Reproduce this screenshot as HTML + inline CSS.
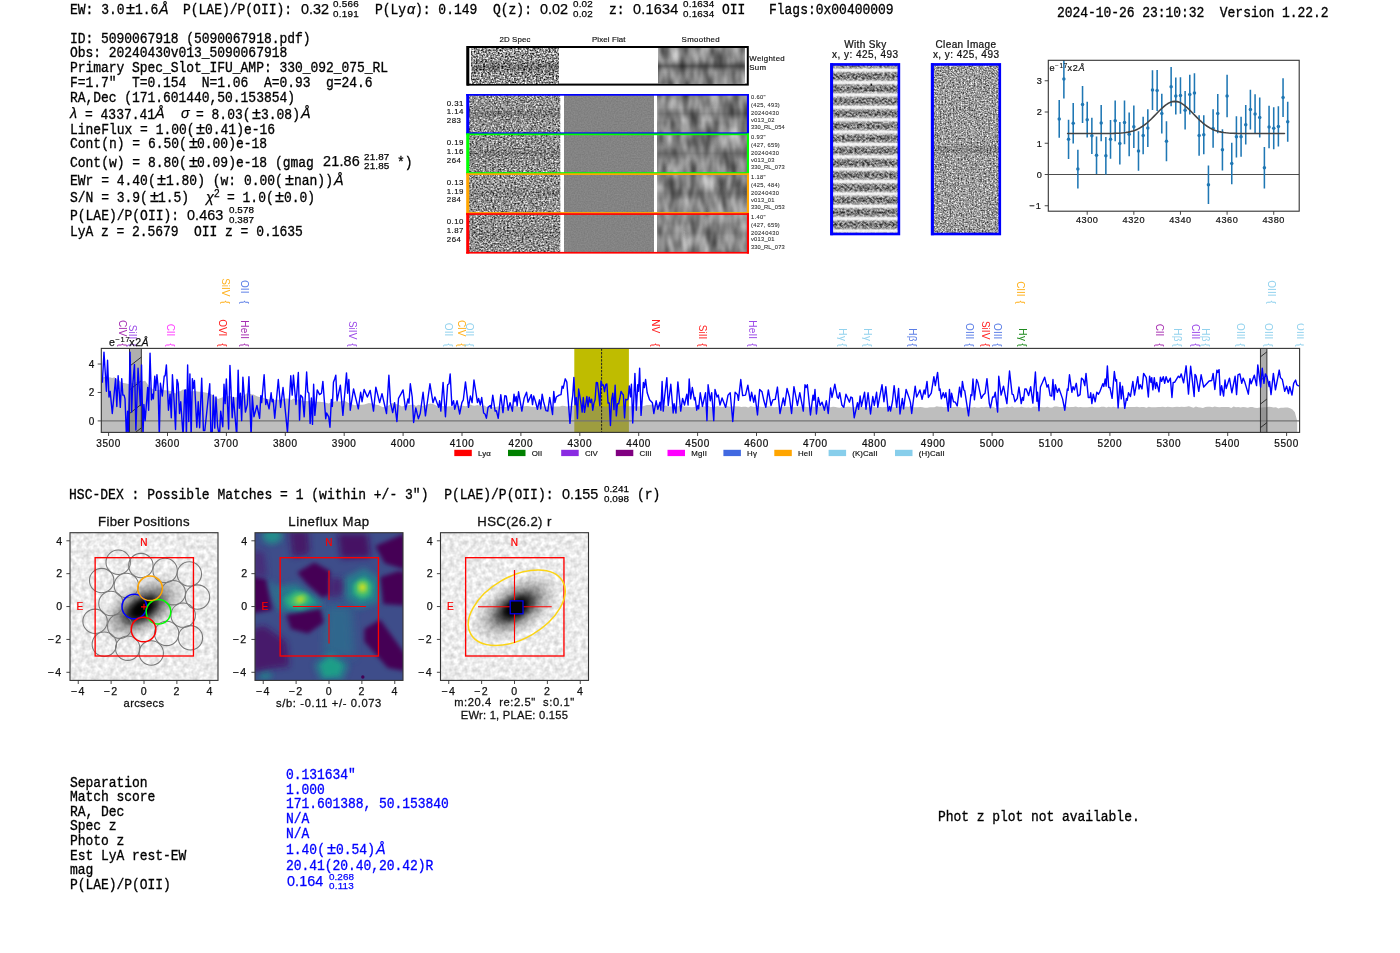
<!DOCTYPE html>
<html><head><meta charset="utf-8"><title>HETDEX 5090067918</title>
<style>
html,body{margin:0;padding:0;background:#fff}
body{width:1400px;height:953px;position:relative;overflow:hidden;font-family:"Liberation Sans",sans-serif;color:#000}
.m{position:absolute;white-space:pre;font-family:"Liberation Mono",monospace;font-size:13px;letter-spacing:-0.046px;line-height:16px;color:#000;transform:scaleY(1.12);transform-origin:0 11.46px;-webkit-text-stroke:0.3px #000;will-change:transform}
.s{position:absolute;white-space:pre;font-family:"Liberation Sans",sans-serif;color:#000;-webkit-text-stroke:0.25px currentColor;will-change:transform}
svg{position:absolute;left:0;top:0;overflow:visible}
svg text{font-family:"Liberation Sans",sans-serif;white-space:pre}
</style></head>
<body>
<div class="m" style="left:69.8px;top:3.04px;letter-spacing:-0.011px">EW: 3.0</div>
<div class="s" style="left:126.23px;top:-1.87px;font-size:16.35px;line-height:20px;letter-spacing:-0.574px">±</div>
<div class="m" style="left:135.11px;top:3.04px;letter-spacing:-0.011px">1.6</div>
<div class="s" style="left:159.38px;top:-0.19px;font-size:14.4px;line-height:18px;letter-spacing:-0.810px;font-style:italic">Å</div>
<div class="m" style="left:182.9px;top:3.04px;letter-spacing:-0.011px">P(LAE)/P(OII):</div>
<div class="s" style="left:300.6px;top:-0.19px;font-size:14.4px;line-height:18px;letter-spacing:-0.008px">0.32</div>
<div class="s" style="left:333.4px;top:-1.62px;font-size:9.86px;line-height:12px;letter-spacing:0.267px">0.566</div>
<div class="s" style="left:333.4px;top:7.88px;font-size:9.86px;line-height:12px;letter-spacing:0.267px">0.191</div>
<div class="m" style="left:375.3px;top:3.04px;letter-spacing:-0.011px">P(Ly</div>
<div class="s" style="left:406.6px;top:-0.19px;font-size:14.4px;line-height:18px;letter-spacing:0.150px;font-style:italic">α</div>
<div class="m" style="left:414.9px;top:3.04px;letter-spacing:-0.011px">): 0.149</div>
<div class="m" style="left:492.8px;top:3.04px;letter-spacing:-0.011px">Q(z):</div>
<div class="s" style="left:540px;top:-0.19px;font-size:14.4px;line-height:18px;letter-spacing:-0.008px">0.02</div>
<div class="s" style="left:573px;top:-1.62px;font-size:9.86px;line-height:12px;letter-spacing:0.204px">0.02</div>
<div class="s" style="left:573px;top:7.88px;font-size:9.86px;line-height:12px;letter-spacing:0.204px">0.02</div>
<div class="m" style="left:609.3px;top:3.04px;letter-spacing:-0.011px">z:</div>
<div class="s" style="left:633px;top:-0.19px;font-size:14.4px;line-height:18px;letter-spacing:0.241px">0.1634</div>
<div class="s" style="left:682.5px;top:-1.62px;font-size:9.86px;line-height:12px;letter-spacing:0.226px">0.1634</div>
<div class="s" style="left:682.5px;top:7.88px;font-size:9.86px;line-height:12px;letter-spacing:0.226px">0.1634</div>
<div class="m" style="left:721.7px;top:3.04px;letter-spacing:-0.011px">OII</div>
<div class="m" style="left:768.8px;top:3.04px;letter-spacing:-0.011px">Flags:0x00400009</div>
<div class="m" style="left:1056.5px;top:5.94px">2024-10-26 23:10:32  Version 1.22.2</div>
<div class="m" style="left:69.8px;top:31.94px">ID: 5090067918 (5090067918.pdf)</div>
<div class="m" style="left:69.8px;top:46.14px">Obs: 20240430v013_5090067918</div>
<div class="m" style="left:69.8px;top:61.34px">Primary Spec_Slot_IFU_AMP: 330_092_075_RL</div>
<div class="m" style="left:69.8px;top:75.94px">F=1.7"  T=0.154  N=1.06  A=0.93  g=24.6</div>
<div class="m" style="left:69.8px;top:90.54px">RA,Dec (171.601440,50.153854)</div>
<div class="s" style="left:70.3px;top:104.41px;font-size:14.4px;line-height:18px;letter-spacing:0.409px;font-style:italic">λ</div>
<div class="m" style="left:84.7px;top:107.64px;letter-spacing:-0.011px">= 4337.41</div>
<div class="s" style="left:154.6px;top:104.41px;font-size:14.4px;line-height:18px;letter-spacing:-0.810px;font-style:italic">Å</div>
<div class="s" style="left:180.9px;top:104.41px;font-size:14.4px;line-height:18px;letter-spacing:-0.739px;font-style:italic">σ</div>
<div class="m" style="left:195.6px;top:107.64px;letter-spacing:-0.011px">= 8.03(</div>
<div class="s" style="left:252.03px;top:102.73px;font-size:16.35px;line-height:20px;letter-spacing:-0.574px">±</div>
<div class="m" style="left:260.91px;top:107.64px;letter-spacing:-0.011px">3.08)</div>
<div class="s" style="left:300.76px;top:104.41px;font-size:14.4px;line-height:18px;letter-spacing:-0.810px;font-style:italic">Å</div>
<div class="m" style="left:69.8px;top:122.54px;letter-spacing:-0.011px">LineFlux = 1.00(</div>
<div class="s" style="left:196.34px;top:117.63px;font-size:16.35px;line-height:20px;letter-spacing:-0.574px">±</div>
<div class="m" style="left:205.22px;top:122.54px;letter-spacing:-0.011px">0.41)e-16</div>
<div class="m" style="left:69.8px;top:137.14px;letter-spacing:-0.011px">Cont(n) = 6.50(</div>
<div class="s" style="left:188.55px;top:132.23px;font-size:16.35px;line-height:20px;letter-spacing:-0.574px">±</div>
<div class="m" style="left:197.43px;top:137.14px;letter-spacing:-0.011px">0.00)e-18</div>
<div class="m" style="left:69.8px;top:155.64px;letter-spacing:-0.011px">Cont(w) = 8.80(</div>
<div class="s" style="left:188.55px;top:150.73px;font-size:16.35px;line-height:20px;letter-spacing:-0.574px">±</div>
<div class="m" style="left:197.43px;top:155.64px;letter-spacing:-0.011px">0.09)e-18 (gmag</div>
<div class="s" style="left:322.5px;top:152.41px;font-size:14.4px;line-height:18px;letter-spacing:0.191px">21.86</div>
<div class="s" style="left:364px;top:150.98px;font-size:9.86px;line-height:12px;letter-spacing:0.167px">21.87</div>
<div class="s" style="left:364px;top:160.48px;font-size:9.86px;line-height:12px;letter-spacing:0.167px">21.85</div>
<div class="m" style="left:396.6px;top:155.64px;letter-spacing:-0.011px">*)</div>
<div class="m" style="left:69.8px;top:173.94px;letter-spacing:-0.011px">EWr = 4.40(</div>
<div class="s" style="left:157.39px;top:169.03px;font-size:16.35px;line-height:20px;letter-spacing:-0.574px">±</div>
<div class="m" style="left:166.27px;top:173.94px;letter-spacing:-0.011px">1.80) (w: 0.00(</div>
<div class="s" style="left:285.02px;top:169.03px;font-size:16.35px;line-height:20px;letter-spacing:-0.574px">±</div>
<div class="m" style="left:293.9px;top:173.94px;letter-spacing:-0.011px">nan))</div>
<div class="s" style="left:334.15px;top:170.71px;font-size:14.4px;line-height:18px;letter-spacing:-0.810px;font-style:italic">Å</div>
<div class="m" style="left:69.8px;top:191.14px;letter-spacing:-0.011px">S/N = 3.9(</div>
<div class="s" style="left:149.6px;top:186.23px;font-size:16.35px;line-height:20px;letter-spacing:-0.574px">±</div>
<div class="m" style="left:158.48px;top:191.14px;letter-spacing:-0.011px">1.5)</div>
<div class="s" style="left:205.5px;top:187.91px;font-size:14.4px;line-height:18px;letter-spacing:-0.132px;font-style:italic">χ</div>
<div class="s" style="left:213.6px;top:186.71px;font-size:10.08px;line-height:13px;letter-spacing:0.120px">2</div>
<div class="m" style="left:226.5px;top:191.14px;letter-spacing:-0.011px">= 1.0(</div>
<div class="s" style="left:275.14px;top:186.23px;font-size:16.35px;line-height:20px;letter-spacing:-0.574px">±</div>
<div class="m" style="left:284.02px;top:191.14px;letter-spacing:-0.011px">0.0)</div>
<div class="m" style="left:69.8px;top:209.14px;letter-spacing:-0.011px">P(LAE)/P(OII):</div>
<div class="s" style="left:187.2px;top:205.91px;font-size:14.4px;line-height:18px;letter-spacing:0.091px">0.463</div>
<div class="s" style="left:228.9px;top:204.48px;font-size:9.86px;line-height:12px;letter-spacing:0.067px">0.578</div>
<div class="s" style="left:228.9px;top:213.98px;font-size:9.86px;line-height:12px;letter-spacing:0.067px">0.387</div>
<div class="m" style="left:69.8px;top:225.34px">LyA z = 2.5679  OII z = 0.1635</div>
<div class="m" style="left:69px;top:487.84px;letter-spacing:0.014px">HSC-DEX : Possible Matches = 1 (within +/- 3")  P(LAE)/P(OII):</div>
<div class="s" style="left:561.8px;top:484.61px;font-size:14.4px;line-height:18px;letter-spacing:0.091px">0.155</div>
<div class="s" style="left:603.8px;top:483.18px;font-size:9.86px;line-height:12px;letter-spacing:0.067px">0.241</div>
<div class="s" style="left:603.8px;top:492.68px;font-size:9.86px;line-height:12px;letter-spacing:0.067px">0.098</div>
<div class="m" style="left:637.3px;top:487.84px;letter-spacing:-0.011px">(r)</div>
<div class="m" style="left:69.8px;top:775.64px">Separation</div>
<div class="m" style="left:69.8px;top:790.04px">Match score</div>
<div class="m" style="left:69.8px;top:804.84px">RA, Dec</div>
<div class="m" style="left:69.8px;top:819.44px">Spec z</div>
<div class="m" style="left:69.8px;top:834.14px">Photo z</div>
<div class="m" style="left:69.8px;top:848.54px">Est LyA rest-EW</div>
<div class="m" style="left:69.8px;top:862.64px">mag</div>
<div class="m" style="left:69.8px;top:877.64px">P(LAE)/P(OII)</div>
<div class="m" style="left:286.4px;top:768.14px;color:#0000ff;-webkit-text-stroke-color:#0000ff">0.131634"</div>
<div class="m" style="left:286.4px;top:782.84px;color:#0000ff;-webkit-text-stroke-color:#0000ff">1.000</div>
<div class="m" style="left:286.4px;top:797.24px;color:#0000ff;-webkit-text-stroke-color:#0000ff">171.601388, 50.153840</div>
<div class="m" style="left:286.4px;top:811.64px;color:#0000ff;-webkit-text-stroke-color:#0000ff">N/A</div>
<div class="m" style="left:286.4px;top:826.64px;color:#0000ff;-webkit-text-stroke-color:#0000ff">N/A</div>
<div class="m" style="left:286.4px;top:843.14px;color:#0000ff;-webkit-text-stroke-color:#0000ff;letter-spacing:-0.011px">1.40(</div>
<div class="s" style="left:327.25px;top:838.23px;font-size:16.35px;line-height:20px;letter-spacing:-0.574px;color:#0000ff">±</div>
<div class="m" style="left:336.13px;top:843.14px;color:#0000ff;-webkit-text-stroke-color:#0000ff;letter-spacing:-0.011px">0.54)</div>
<div class="s" style="left:376.08px;top:839.91px;font-size:14.4px;line-height:18px;letter-spacing:-0.810px;color:#0000ff;font-style:italic">Å</div>
<div class="m" style="left:286.4px;top:858.74px;color:#0000ff;-webkit-text-stroke-color:#0000ff">20.41(20.40,20.42)R</div>
<div class="s" style="left:287.1px;top:872.01px;font-size:14.4px;line-height:18px;letter-spacing:0.091px;color:#0000ff">0.164</div>
<div class="s" style="left:328.5px;top:870.58px;font-size:9.86px;line-height:12px;letter-spacing:0.067px;color:#0000ff">0.268</div>
<div class="s" style="left:328.5px;top:880.08px;font-size:9.86px;line-height:12px;letter-spacing:0.213px;color:#0000ff">0.113</div>
<div class="m" style="left:938.2px;top:810.34px">Phot z plot not available.</div>
<svg width="1400" height="953" viewBox="0 0 1400 953">
<defs>
<filter id="nz" x="0" y="0" width="100%" height="100%" color-interpolation-filters="sRGB">
<feTurbulence type="fractalNoise" baseFrequency="0.55 0.62" numOctaves="2" seed="3" result="t"/>
<feColorMatrix in="t" type="matrix" values="1.35 0 0 0 -0.105  1.35 0 0 0 -0.105  1.35 0 0 0 -0.105  0 0 0 0 1"/>
</filter>
<filter id="nzw" x="0" y="0" width="100%" height="100%" color-interpolation-filters="sRGB">
<feTurbulence type="fractalNoise" baseFrequency="0.55 0.62" numOctaves="2" seed="17" result="t"/>
<feColorMatrix in="t" type="matrix" values="1.8 0 0 0 -0.32  1.8 0 0 0 -0.32  1.8 0 0 0 -0.32  0 0 0 0 1"/>
</filter>
<filter id="nz2" x="0" y="0" width="100%" height="100%" color-interpolation-filters="sRGB">
<feTurbulence type="fractalNoise" baseFrequency="0.54 0.62" numOctaves="2" seed="11" result="t"/>
<feColorMatrix in="t" type="matrix" values="1.35 0 0 0 -0.115  1.35 0 0 0 -0.115  1.35 0 0 0 -0.115  0 0 0 0 1"/>
</filter>
<filter id="sm" x="0" y="0" width="100%" height="100%" color-interpolation-filters="sRGB">
<feTurbulence type="fractalNoise" baseFrequency="0.1 0.04" numOctaves="2" seed="7" result="t"/>
<feColorMatrix in="t" type="matrix" values="0.8 0 0 0 0.135  0.8 0 0 0 0.135  0.8 0 0 0 0.135  0 0 0 0 1"/>
</filter>
<filter id="fl" x="0" y="0" width="100%" height="100%" color-interpolation-filters="sRGB">
<feTurbulence type="fractalNoise" baseFrequency="0.7" numOctaves="1" seed="5" result="t"/>
<feColorMatrix in="t" type="matrix" values="0.12 0 0 0 0.455  0.12 0 0 0 0.455  0.12 0 0 0 0.455  0 0 0 0 1"/>
</filter>
<linearGradient id="dband" x1="0" y1="0" x2="0" y2="1">
<stop offset="0" stop-color="#000" stop-opacity="0"/><stop offset="0.3" stop-color="#000" stop-opacity="0.05"/>
<stop offset="0.5" stop-color="#000" stop-opacity="0.3"/><stop offset="0.7" stop-color="#000" stop-opacity="0.05"/><stop offset="1" stop-color="#000" stop-opacity="0"/>
</linearGradient>
</defs>
<text x="499.4" y="41.9" font-size="7.87" letter-spacing="0.160" fill="#111111" stroke="#111111" stroke-width="0.17">2D Spec</text>
<text x="592" y="41.9" font-size="7.87" letter-spacing="0.124" fill="#111111" stroke="#111111" stroke-width="0.17">Pixel Flat</text>
<text x="681.6" y="41.9" font-size="7.87" letter-spacing="0.316" fill="#111111" stroke="#111111" stroke-width="0.17">Smoothed</text>
<text x="749.3" y="60.9" font-size="7.87" letter-spacing="0.337" fill="#111111" stroke="#111111" stroke-width="0.17">Weighted</text>
<text x="749.3" y="69.6" font-size="7.87" letter-spacing="0.318" fill="#111111" stroke="#111111" stroke-width="0.17">Sum</text>
<rect x="467.6" y="47.0" width="280.2" height="37.6" fill="#fff" stroke="#000" stroke-width="2.0"/>
<rect x="466.4" y="46.0" width="2.9" height="39.6" fill="#000"/>
<rect x="471.2" y="48.0" width="87.6" height="35.6" filter="url(#nzw)"/>
<rect x="658" y="48.2" width="86.7" height="35.4" filter="url(#sm)"/>
<rect x="658" y="50" width="86.7" height="32" fill="url(#dband)"/><rect x="658" y="56" width="86.7" height="20" fill="url(#dband)" opacity="0.7"/>
<rect x="471.2" y="52" width="87.6" height="30" fill="url(#dband)" opacity="0.9"/>
<rect x="469" y="95" width="91.3" height="37.5" filter="url(#nz)"/>
<rect x="560.3" y="95" width="3.9" height="37.5" fill="#fff"/>
<rect x="564.2" y="95" width="89.8" height="37.5" filter="url(#fl)"/>
<rect x="654" y="95" width="3.3" height="37.5" fill="#fff"/>
<rect x="657.3" y="95" width="89.8" height="37.5" filter="url(#sm)"/>
<rect x="657.3" y="98" width="89.8" height="31.5" fill="url(#dband)" opacity="0.8"/>
<rect x="469" y="103" width="91.3" height="21.5" fill="url(#dband)" opacity="0.6"/>
<rect x="466.2" y="94" width="3.0" height="40.1" fill="#0000ff"/>
<rect x="746.9" y="94" width="2.1" height="40.1" fill="#0000ff"/>
<rect x="466.2" y="94" width="282.8" height="1.7" fill="#0000ff"/>
<rect x="466.2" y="132.4" width="282.8" height="1.7" fill="#0000ff"/>
<text x="446.8" y="105.5" font-size="7.87" letter-spacing="0.424" fill="#111111" stroke="#111111" stroke-width="0.17">0.31</text>
<text x="446.8" y="114.35" font-size="7.87" letter-spacing="0.424" fill="#111111" stroke="#111111" stroke-width="0.17">1.14</text>
<text x="446.8" y="123.2" font-size="7.87" letter-spacing="0.484" fill="#111111" stroke="#111111" stroke-width="0.17">283</text>
<text x="751" y="99.2" font-size="5.73" letter-spacing="0.352" fill="#333" stroke="#333" stroke-width="0.11">0.60"</text>
<text x="751" y="106.8" font-size="5.73" letter-spacing="0.299" fill="#333" stroke="#333" stroke-width="0.11">(425, 493)</text>
<text x="751" y="115.1" font-size="5.73" letter-spacing="0.352" fill="#333" stroke="#333" stroke-width="0.11">20240430</text>
<text x="751" y="121.7" font-size="5.73" letter-spacing="0.255" fill="#333" stroke="#333" stroke-width="0.11">v013_02</text>
<text x="751" y="128.8" font-size="5.73" letter-spacing="0.094" fill="#333" stroke="#333" stroke-width="0.11">330_RL_054</text>
<rect x="469" y="134.5" width="91.3" height="37.8" filter="url(#nz2)"/>
<rect x="560.3" y="134.5" width="3.9" height="37.8" fill="#fff"/>
<rect x="564.2" y="134.5" width="89.8" height="37.8" filter="url(#fl)"/>
<rect x="654" y="134.5" width="3.3" height="37.8" fill="#fff"/>
<rect x="657.3" y="134.5" width="89.8" height="37.8" filter="url(#sm)"/>
<rect x="657.3" y="137.5" width="89.8" height="31.8" fill="url(#dband)" opacity="0.7"/>
<rect x="469" y="142.5" width="91.3" height="21.8" fill="url(#dband)" opacity="0.5"/>
<rect x="466.2" y="133.5" width="3.0" height="40.4" fill="#00ff00"/>
<rect x="746.9" y="133.5" width="2.1" height="40.4" fill="#00ff00"/>
<rect x="466.2" y="133.5" width="282.8" height="1.7" fill="#00ff00"/>
<rect x="466.2" y="172.2" width="282.8" height="1.7" fill="#00ff00"/>
<text x="446.8" y="145.1" font-size="7.87" letter-spacing="0.424" fill="#111111" stroke="#111111" stroke-width="0.17">0.19</text>
<text x="446.8" y="153.95" font-size="7.87" letter-spacing="0.424" fill="#111111" stroke="#111111" stroke-width="0.17">1.16</text>
<text x="446.8" y="162.8" font-size="7.87" letter-spacing="0.484" fill="#111111" stroke="#111111" stroke-width="0.17">264</text>
<text x="751" y="139.1" font-size="5.73" letter-spacing="0.352" fill="#333" stroke="#333" stroke-width="0.11">0.93"</text>
<text x="751" y="146.7" font-size="5.73" letter-spacing="0.299" fill="#333" stroke="#333" stroke-width="0.11">(427, 659)</text>
<text x="751" y="155" font-size="5.73" letter-spacing="0.352" fill="#333" stroke="#333" stroke-width="0.11">20240430</text>
<text x="751" y="161.6" font-size="5.73" letter-spacing="0.255" fill="#333" stroke="#333" stroke-width="0.11">v013_03</text>
<text x="751" y="168.7" font-size="5.73" letter-spacing="0.094" fill="#333" stroke="#333" stroke-width="0.11">330_RL_073</text>
<rect x="469" y="174.3" width="91.3" height="37.9" filter="url(#nz)"/>
<rect x="560.3" y="174.3" width="3.9" height="37.9" fill="#fff"/>
<rect x="564.2" y="174.3" width="89.8" height="37.9" filter="url(#fl)"/>
<rect x="654" y="174.3" width="3.3" height="37.9" fill="#fff"/>
<rect x="657.3" y="174.3" width="89.8" height="37.9" filter="url(#sm)"/>
<rect x="657.3" y="177.3" width="89.8" height="31.9" fill="url(#dband)" opacity="0.4"/>
<rect x="469" y="182.3" width="91.3" height="21.9" fill="url(#dband)" opacity="0.4"/>
<rect x="466.2" y="173.3" width="3.0" height="40.5" fill="#ffa500"/>
<rect x="746.9" y="173.3" width="2.1" height="40.5" fill="#ffa500"/>
<rect x="466.2" y="173.3" width="282.8" height="1.7" fill="#ffa500"/>
<rect x="466.2" y="212.1" width="282.8" height="1.7" fill="#ffa500"/>
<text x="446.8" y="184.7" font-size="7.87" letter-spacing="0.424" fill="#111111" stroke="#111111" stroke-width="0.17">0.13</text>
<text x="446.8" y="193.55" font-size="7.87" letter-spacing="0.424" fill="#111111" stroke="#111111" stroke-width="0.17">1.19</text>
<text x="446.8" y="202.4" font-size="7.87" letter-spacing="0.484" fill="#111111" stroke="#111111" stroke-width="0.17">284</text>
<text x="751" y="179" font-size="5.73" letter-spacing="0.352" fill="#333" stroke="#333" stroke-width="0.11">1.18"</text>
<text x="751" y="186.6" font-size="5.73" letter-spacing="0.299" fill="#333" stroke="#333" stroke-width="0.11">(425, 484)</text>
<text x="751" y="194.9" font-size="5.73" letter-spacing="0.352" fill="#333" stroke="#333" stroke-width="0.11">20240430</text>
<text x="751" y="201.5" font-size="5.73" letter-spacing="0.255" fill="#333" stroke="#333" stroke-width="0.11">v013_01</text>
<text x="751" y="208.6" font-size="5.73" letter-spacing="0.094" fill="#333" stroke="#333" stroke-width="0.11">330_RL_053</text>
<rect x="469" y="214.2" width="91.3" height="37.8" filter="url(#nz2)"/>
<rect x="560.3" y="214.2" width="3.9" height="37.8" fill="#fff"/>
<rect x="564.2" y="214.2" width="89.8" height="37.8" filter="url(#fl)"/>
<rect x="654" y="214.2" width="3.3" height="37.8" fill="#fff"/>
<rect x="657.3" y="214.2" width="89.8" height="37.8" filter="url(#sm)"/>
<rect x="657.3" y="217.2" width="89.8" height="31.8" fill="url(#dband)" opacity="0.4"/>
<rect x="469" y="222.2" width="91.3" height="21.8" fill="url(#dband)" opacity="0.3"/>
<rect x="466.2" y="213.2" width="3.0" height="40.4" fill="#ff0000"/>
<rect x="746.9" y="213.2" width="2.1" height="40.4" fill="#ff0000"/>
<rect x="466.2" y="213.2" width="282.8" height="1.7" fill="#ff0000"/>
<rect x="466.2" y="251.9" width="282.8" height="1.7" fill="#ff0000"/>
<text x="446.8" y="224.3" font-size="7.87" letter-spacing="0.424" fill="#111111" stroke="#111111" stroke-width="0.17">0.10</text>
<text x="446.8" y="233.15" font-size="7.87" letter-spacing="0.424" fill="#111111" stroke="#111111" stroke-width="0.17">1.87</text>
<text x="446.8" y="242" font-size="7.87" letter-spacing="0.484" fill="#111111" stroke="#111111" stroke-width="0.17">264</text>
<text x="751" y="218.9" font-size="5.73" letter-spacing="0.352" fill="#333" stroke="#333" stroke-width="0.11">1.40"</text>
<text x="751" y="226.5" font-size="5.73" letter-spacing="0.299" fill="#333" stroke="#333" stroke-width="0.11">(427, 659)</text>
<text x="751" y="234.8" font-size="5.73" letter-spacing="0.352" fill="#333" stroke="#333" stroke-width="0.11">20240430</text>
<text x="751" y="241.4" font-size="5.73" letter-spacing="0.255" fill="#333" stroke="#333" stroke-width="0.11">v013_01</text>
<text x="751" y="248.5" font-size="5.73" letter-spacing="0.094" fill="#333" stroke="#333" stroke-width="0.11">330_RL_073</text>
</svg>
<svg width="1400" height="953" viewBox="0 0 1400 953">
<defs>
<linearGradient id="skyband" x1="0" y1="0" x2="0" y2="1">
<stop offset="0" stop-color="#f4f4f4"/><stop offset="0.10" stop-color="#f0f0f0"/>
<stop offset="0.24" stop-color="#9c9c9c"/><stop offset="0.45" stop-color="#747474"/><stop offset="0.66" stop-color="#7a7a7a"/>
<stop offset="0.84" stop-color="#a6a6a6"/><stop offset="0.96" stop-color="#f0f0f0"/><stop offset="1" stop-color="#f4f4f4"/>
</linearGradient>
<pattern id="skypat" x="0" y="69.8" width="70" height="12.37" patternUnits="userSpaceOnUse">
<rect x="0" y="0" width="70" height="12.37" fill="url(#skyband)"/>
</pattern>
<filter id="skyf" x="0" y="0" width="100%" height="100%" color-interpolation-filters="sRGB">
<feTurbulence type="fractalNoise" baseFrequency="0.4 0.5" numOctaves="2" seed="21" result="t"/>
<feColorMatrix in="t" type="matrix" values="2.2 0 0 0 -0.6  2.2 0 0 0 -0.6  2.2 0 0 0 -0.6  0 0 0 0 1" result="n"/>
<feComposite in="SourceGraphic" in2="n" operator="arithmetic" k1="-1.1" k2="1.55" k3="1.1" k4="-0.55" result="c"/>
<feGaussianBlur in="c" stdDeviation="0.45"/>
</filter>
<filter id="cln" x="0" y="0" width="100%" height="100%" color-interpolation-filters="sRGB">
<feTurbulence type="fractalNoise" baseFrequency="0.62 0.68" numOctaves="2" seed="33" result="t"/>
<feColorMatrix in="t" type="matrix" values="1.25 0 0 0 -0.02  1.25 0 0 0 -0.02  1.25 0 0 0 -0.02  0 0 0 0 1"/>
</filter>
</defs>
<text x="844.22" y="47.6" font-size="10.01" letter-spacing="0.359" fill="#111111" stroke="#111111" stroke-width="0.23">With Sky</text>
<text x="832.09" y="58.3" font-size="10.01" letter-spacing="0.466" fill="#111111" stroke="#111111" stroke-width="0.23">x, y: 425, 493</text>
<text x="935.44" y="47.6" font-size="10.01" letter-spacing="0.395" fill="#111111" stroke="#111111" stroke-width="0.23">Clean Image</text>
<text x="932.89" y="58.3" font-size="10.01" letter-spacing="0.466" fill="#111111" stroke="#111111" stroke-width="0.23">x, y: 425, 493</text>
<rect x="832" y="65" width="67" height="169" fill="url(#skypat)" filter="url(#skyf)"/>
<rect x="831.5" y="64.4" width="67.4" height="169.6" fill="none" stroke="#0000ff" stroke-width="2.6"/>
<rect x="830.2" y="63.2" width="2.9" height="172" fill="#0000ff"/>
<rect x="870.5" y="83.6" width="1.6" height="2.2" fill="#111"/>
<rect x="933" y="65" width="67" height="169" filter="url(#cln)"/>
<rect x="933" y="146" width="67" height="7" fill="#000" opacity="0.13"/>
<rect x="932.2" y="64.4" width="67.6" height="169.6" fill="none" stroke="#0000ff" stroke-width="2.6"/>
<rect x="930.9" y="63.2" width="2.9" height="172" fill="#0000ff"/>
<clipPath id="fitclip"><rect x="1048.3" y="60.3" width="250.9" height="150.9"/></clipPath>
<rect x="1048.3" y="60.3" width="250.9" height="150.9" fill="#fff"/>
<g clip-path="url(#fitclip)">
<line x1="1048.3" y1="174.5" x2="1299.2" y2="174.5" stroke="#4d4d4d" stroke-width="1.1"/>
<path d="M1059.22 99.97V137.78M1063.88 59.19V98.56M1068.55 119.66V159.03M1073.21 103.06V143.44M1077.87 149.75V188.5M1082.54 86.06V122.94M1087.2 101.75V137.56M1091.86 117.69V153.94M1096.53 136.56V174.06M1101.19 104.91V141.16M1105.85 136.91V174.41M1110.52 119.97V158.72M1115.18 100.41V141.28M1119.84 122.12V164.62M1124.5 100.5V144.25M1129.17 112.44V156.19M1133.83 105.5V148M1138.49 131.28V170.66M1143.16 116.72V154.22M1147.82 109.19V147M1152.48 70.28V109.97M1157.14 70V110.88M1161.81 93.69V133.56M1166.47 121.19V161.19M1171.13 67.09V106.28M1175.8 77.53V114.41M1180.46 77.19V113.69M1185.12 90.88V129.62M1189.79 74.69V114.56M1194.45 73.16V113.03M1199.11 115.28V155.66M1203.78 115.31V154.31M1208.44 165.38V204.12M1213.1 109.16V147.66M1217.76 94.03V133.22M1222.43 129.19V170.44M1227.09 74.81V117.31M1231.75 142.78V184.34M1236.42 116.19V157.44M1241.08 116.81V156.81M1245.74 105.03V144.41M1250.4 89.66V129.53M1255.07 94.28V133.66M1259.73 97.56V137.44M1264.39 147V188.56M1269.06 105.81V148.31M1273.72 107.16V149.34M1278.38 106.19V146.56M1283.05 78.25V117M1287.71 101.69V141.69" stroke="#1f77b4" stroke-width="1.55" fill="none"/>
<g fill="#1f77b4"><circle cx="1059.22" cy="118.88" r="1.75"/><circle cx="1063.88" cy="78.88" r="1.75"/><circle cx="1068.55" cy="139.34" r="1.75"/><circle cx="1073.21" cy="123.25" r="1.75"/><circle cx="1077.87" cy="169.12" r="1.75"/><circle cx="1082.54" cy="104.5" r="1.75"/><circle cx="1087.2" cy="119.66" r="1.75"/><circle cx="1091.86" cy="135.81" r="1.75"/><circle cx="1096.53" cy="155.31" r="1.75"/><circle cx="1101.19" cy="123.03" r="1.75"/><circle cx="1105.85" cy="155.66" r="1.75"/><circle cx="1110.52" cy="139.34" r="1.75"/><circle cx="1115.18" cy="120.84" r="1.75"/><circle cx="1119.84" cy="143.38" r="1.75"/><circle cx="1124.5" cy="122.38" r="1.75"/><circle cx="1129.17" cy="134.31" r="1.75"/><circle cx="1133.83" cy="126.75" r="1.75"/><circle cx="1138.49" cy="150.97" r="1.75"/><circle cx="1143.16" cy="135.47" r="1.75"/><circle cx="1147.82" cy="128.09" r="1.75"/><circle cx="1152.48" cy="90.12" r="1.75"/><circle cx="1157.14" cy="90.44" r="1.75"/><circle cx="1161.81" cy="113.62" r="1.75"/><circle cx="1166.47" cy="141.19" r="1.75"/><circle cx="1171.13" cy="86.69" r="1.75"/><circle cx="1175.8" cy="95.97" r="1.75"/><circle cx="1180.46" cy="95.44" r="1.75"/><circle cx="1185.12" cy="110.25" r="1.75"/><circle cx="1189.79" cy="94.62" r="1.75"/><circle cx="1194.45" cy="93.09" r="1.75"/><circle cx="1199.11" cy="135.47" r="1.75"/><circle cx="1203.78" cy="134.81" r="1.75"/><circle cx="1208.44" cy="184.75" r="1.75"/><circle cx="1213.1" cy="128.41" r="1.75"/><circle cx="1217.76" cy="113.62" r="1.75"/><circle cx="1222.43" cy="149.81" r="1.75"/><circle cx="1227.09" cy="96.06" r="1.75"/><circle cx="1231.75" cy="163.56" r="1.75"/><circle cx="1236.42" cy="136.81" r="1.75"/><circle cx="1241.08" cy="136.81" r="1.75"/><circle cx="1245.74" cy="124.72" r="1.75"/><circle cx="1250.4" cy="109.59" r="1.75"/><circle cx="1255.07" cy="113.97" r="1.75"/><circle cx="1259.73" cy="117.5" r="1.75"/><circle cx="1264.39" cy="167.78" r="1.75"/><circle cx="1269.06" cy="127.06" r="1.75"/><circle cx="1273.72" cy="128.25" r="1.75"/><circle cx="1278.38" cy="126.38" r="1.75"/><circle cx="1283.05" cy="97.62" r="1.75"/><circle cx="1287.71" cy="121.69" r="1.75"/></g>
<polyline points="1067.62 133.56 1069.95 133.56 1072.28 133.56 1074.61 133.56 1076.94 133.56 1079.27 133.56 1081.6 133.56 1083.94 133.56 1086.27 133.56 1088.6 133.56 1090.93 133.56 1093.26 133.56 1095.59 133.56 1097.92 133.56 1100.26 133.55 1102.59 133.54 1104.92 133.53 1107.25 133.52 1109.58 133.49 1111.91 133.45 1114.25 133.39 1116.58 133.31 1118.91 133.19 1121.24 133.03 1123.57 132.81 1125.9 132.51 1128.23 132.11 1130.57 131.6 1132.9 130.95 1135.23 130.14 1137.56 129.14 1139.89 127.94 1142.22 126.52 1144.55 124.88 1146.89 123.02 1149.22 120.97 1151.55 118.74 1153.88 116.39 1156.21 113.97 1158.54 111.55 1160.88 109.22 1163.21 107.05 1165.54 105.13 1167.87 103.54 1170.2 102.36 1172.53 101.62 1174.86 101.38 1177.2 101.62 1179.53 102.36 1181.86 103.54 1184.19 105.13 1186.52 107.05 1188.85 109.22 1191.18 111.55 1193.52 113.97 1195.85 116.39 1198.18 118.74 1200.51 120.97 1202.84 123.02 1205.17 124.88 1207.51 126.52 1209.84 127.94 1212.17 129.14 1214.5 130.14 1216.83 130.95 1219.16 131.6 1221.49 132.11 1223.83 132.51 1226.16 132.81 1228.49 133.03 1230.82 133.19 1233.15 133.31 1235.48 133.39 1237.81 133.45 1240.15 133.49 1242.48 133.52 1244.81 133.53 1247.14 133.54 1249.47 133.55 1251.8 133.56 1254.14 133.56 1256.47 133.56 1258.8 133.56 1261.13 133.56 1263.46 133.56 1265.79 133.56 1268.12 133.56 1270.46 133.56 1272.79 133.56 1275.12 133.56 1277.45 133.56 1279.78 133.56 1282.11 133.56 1284.44 133.56" fill="none" stroke="#444444" stroke-width="1.6" stroke-linejoin="round" stroke-linecap="round"/>
</g>
<rect x="1048.3" y="60.3" width="250.9" height="150.9" fill="none" stroke="#333" stroke-width="1.1"/>
<text x="1075.88" y="222.9" font-size="9.17" letter-spacing="0.564" fill="#111111" stroke="#111111" stroke-width="0.21">4300</text>
<text x="1122.51" y="222.9" font-size="9.17" letter-spacing="0.564" fill="#111111" stroke="#111111" stroke-width="0.21">4320</text>
<text x="1169.14" y="222.9" font-size="9.17" letter-spacing="0.564" fill="#111111" stroke="#111111" stroke-width="0.21">4340</text>
<text x="1215.77" y="222.9" font-size="9.17" letter-spacing="0.564" fill="#111111" stroke="#111111" stroke-width="0.21">4360</text>
<text x="1262.4" y="222.9" font-size="9.17" letter-spacing="0.564" fill="#111111" stroke="#111111" stroke-width="0.21">4380</text>
<text x="1029.18" y="209.05" font-size="9.17" letter-spacing="1.334" fill="#111111" stroke="#111111" stroke-width="0.21">−1</text>
<text x="1036.64" y="177.8" font-size="9.17" letter-spacing="0.564" fill="#111111" stroke="#111111" stroke-width="0.21">0</text>
<text x="1036.64" y="146.55" font-size="9.17" letter-spacing="0.564" fill="#111111" stroke="#111111" stroke-width="0.21">1</text>
<text x="1036.64" y="115.3" font-size="9.17" letter-spacing="0.564" fill="#111111" stroke="#111111" stroke-width="0.21">2</text>
<text x="1036.64" y="84.05" font-size="9.17" letter-spacing="0.564" fill="#111111" stroke="#111111" stroke-width="0.21">3</text>
<path d="M1087.2 211.2v3.6M1133.83 211.2v3.6M1180.46 211.2v3.6M1227.09 211.2v3.6M1273.72 211.2v3.6M1048.3 205.75h-3.6M1048.3 174.5h-3.6M1048.3 143.25h-3.6M1048.3 112h-3.6M1048.3 80.75h-3.6" stroke="#333" stroke-width="0.9" fill="none"/>
<text x="1049.6" y="71.3" font-size="9.17" letter-spacing="0.377" fill="#111111" stroke="#111111" stroke-width="0.21">e</text>
<text x="1055" y="67.7" font-size="6.39" letter-spacing="0.751" fill="#111111" stroke="#111111" stroke-width="0.13">−17</text>
<text x="1067.6" y="71.3" font-size="9.17" letter-spacing="0.624" fill="#111111" stroke="#111111" stroke-width="0.21">x2</text>
<text x="1078.6" y="71.3" font-size="9.17" letter-spacing="-0.026" fill="#111111" stroke="#111111" stroke-width="0.21" font-style="italic">Å</text>
</svg>
<svg width="1400" height="953" viewBox="0 0 1400 953">
<g clip-path="url(#pageclip)">
<clipPath id="pageclip"><rect x="0" y="0" width="1303.8" height="953"/></clipPath>
<text transform="translate(119.1 319.93) rotate(90)" font-size="10.01" letter-spacing="-0.129" fill="#a52cb0" stroke="#a52cb0" stroke-width="0">CIV</text>
<text transform="translate(119.1 343.2) rotate(90)" font-size="10.51" fill="#a52cb0">{</text>
<text transform="translate(128.5 324.72) rotate(90)" font-size="10.01" letter-spacing="0.035" fill="#9a48e8" stroke="#9a48e8" stroke-width="0">SiII</text>
<text transform="translate(128.5 343.2) rotate(90)" font-size="10.51" fill="#9a48e8">{</text>
<text transform="translate(166.7 323.72) rotate(90)" font-size="10.01" letter-spacing="-0.091" fill="#ff3cff" stroke="#ff3cff" stroke-width="0">CII</text>
<text transform="translate(166.7 343.2) rotate(90)" font-size="10.51" fill="#ff3cff">{</text>
<text transform="translate(219.1 319.24) rotate(90)" font-size="10.01" letter-spacing="-0.084" fill="#ff2020" stroke="#ff2020" stroke-width="0">OVI</text>
<text transform="translate(219.1 343.2) rotate(90)" font-size="10.51" fill="#ff2020">{</text>
<text transform="translate(240.8 320.3) rotate(90)" font-size="10.01" letter-spacing="0.165" fill="#a52cb0" stroke="#a52cb0" stroke-width="0">HeII</text>
<text transform="translate(240.8 343.2) rotate(90)" font-size="10.51" fill="#a52cb0">{</text>
<text transform="translate(349.1 320.94) rotate(90)" font-size="10.01" letter-spacing="0.006" fill="#9a48e8" stroke="#9a48e8" stroke-width="0">SiIV</text>
<text transform="translate(349.1 343.2) rotate(90)" font-size="10.51" fill="#9a48e8">{</text>
<text transform="translate(444.6 322.85) rotate(90)" font-size="10.01" letter-spacing="0.011" fill="#92d2ee" stroke="#92d2ee" stroke-width="0">OII</text>
<text transform="translate(444.6 343.2) rotate(90)" font-size="10.51" fill="#92d2ee">{</text>
<text transform="translate(457.5 319.93) rotate(90)" font-size="10.01" letter-spacing="-0.129" fill="#ffb01c" stroke="#ffb01c" stroke-width="0">CIV</text>
<text transform="translate(457.5 343.2) rotate(90)" font-size="10.51" fill="#ffb01c">{</text>
<text transform="translate(466 322.85) rotate(90)" font-size="10.01" letter-spacing="0.011" fill="#92d2ee" stroke="#92d2ee" stroke-width="0">OII</text>
<text transform="translate(466 343.2) rotate(90)" font-size="10.51" fill="#92d2ee">{</text>
<text transform="translate(652.4 319.23) rotate(90)" font-size="10.01" letter-spacing="0.006" fill="#ff2020" stroke="#ff2020" stroke-width="0">NV</text>
<text transform="translate(652.4 343.2) rotate(90)" font-size="10.51" fill="#ff2020">{</text>
<text transform="translate(699.4 324.72) rotate(90)" font-size="10.01" letter-spacing="0.035" fill="#ff2020" stroke="#ff2020" stroke-width="0">SiII</text>
<text transform="translate(699.4 343.2) rotate(90)" font-size="10.51" fill="#ff2020">{</text>
<text transform="translate(749.3 320.3) rotate(90)" font-size="10.01" letter-spacing="0.165" fill="#9a48e8" stroke="#9a48e8" stroke-width="0">HeII</text>
<text transform="translate(749.3 343.2) rotate(90)" font-size="10.51" fill="#9a48e8">{</text>
<text transform="translate(839.4 328.3) rotate(90)" font-size="10.01" letter-spacing="0.413" fill="#92d2ee" stroke="#92d2ee" stroke-width="0">Hγ</text>
<text transform="translate(839.4 343.2) rotate(90)" font-size="10.51" fill="#92d2ee">{</text>
<text transform="translate(863.7 328.3) rotate(90)" font-size="10.01" letter-spacing="0.413" fill="#92d2ee" stroke="#92d2ee" stroke-width="0">Hγ</text>
<text transform="translate(863.7 343.2) rotate(90)" font-size="10.51" fill="#92d2ee">{</text>
<text transform="translate(908.5 328.3) rotate(90)" font-size="10.01" letter-spacing="0.262" fill="#5a7de6" stroke="#5a7de6" stroke-width="0">Hβ</text>
<text transform="translate(908.5 343.2) rotate(90)" font-size="10.51" fill="#5a7de6">{</text>
<text transform="translate(965.6 323.08) rotate(90)" font-size="10.01" letter-spacing="0.030" fill="#5a7de6" stroke="#5a7de6" stroke-width="0">OIII</text>
<text transform="translate(965.6 343.2) rotate(90)" font-size="10.51" fill="#5a7de6">{</text>
<text transform="translate(982 320.94) rotate(90)" font-size="10.01" letter-spacing="0.006" fill="#ff2020" stroke="#ff2020" stroke-width="0">SiIV</text>
<text transform="translate(982 343.2) rotate(90)" font-size="10.51" fill="#ff2020">{</text>
<text transform="translate(993.7 323.08) rotate(90)" font-size="10.01" letter-spacing="0.030" fill="#5a7de6" stroke="#5a7de6" stroke-width="0">OIII</text>
<text transform="translate(993.7 343.2) rotate(90)" font-size="10.51" fill="#5a7de6">{</text>
<text transform="translate(1018.5 328.3) rotate(90)" font-size="10.01" letter-spacing="0.413" fill="#1f8a1f" stroke="#1f8a1f" stroke-width="0">Hγ</text>
<text transform="translate(1018.5 343.2) rotate(90)" font-size="10.51" fill="#1f8a1f">{</text>
<text transform="translate(1155.7 323.72) rotate(90)" font-size="10.01" letter-spacing="-0.091" fill="#a52cb0" stroke="#a52cb0" stroke-width="0">CII</text>
<text transform="translate(1155.7 343.2) rotate(90)" font-size="10.51" fill="#a52cb0">{</text>
<text transform="translate(1174.2 328.3) rotate(90)" font-size="10.01" letter-spacing="0.262" fill="#92d2ee" stroke="#92d2ee" stroke-width="0">Hβ</text>
<text transform="translate(1174.2 343.2) rotate(90)" font-size="10.51" fill="#92d2ee">{</text>
<text transform="translate(1192.1 323.94) rotate(90)" font-size="10.01" letter-spacing="-0.047" fill="#9a48e8" stroke="#9a48e8" stroke-width="0">CIII</text>
<text transform="translate(1192.1 343.2) rotate(90)" font-size="10.51" fill="#9a48e8">{</text>
<text transform="translate(1202.1 328.3) rotate(90)" font-size="10.01" letter-spacing="0.262" fill="#92d2ee" stroke="#92d2ee" stroke-width="0">Hβ</text>
<text transform="translate(1202.1 343.2) rotate(90)" font-size="10.51" fill="#92d2ee">{</text>
<text transform="translate(1237.1 323.08) rotate(90)" font-size="10.01" letter-spacing="0.030" fill="#92d2ee" stroke="#92d2ee" stroke-width="0">OIII</text>
<text transform="translate(1237.1 343.2) rotate(90)" font-size="10.51" fill="#92d2ee">{</text>
<text transform="translate(1265.4 323.08) rotate(90)" font-size="10.01" letter-spacing="0.030" fill="#92d2ee" stroke="#92d2ee" stroke-width="0">OIII</text>
<text transform="translate(1265.4 343.2) rotate(90)" font-size="10.51" fill="#92d2ee">{</text>
<text transform="translate(1296.8 323.08) rotate(90)" font-size="10.01" letter-spacing="0.030" fill="#92d2ee" stroke="#92d2ee" stroke-width="0">OIII</text>
<text transform="translate(1296.8 343.2) rotate(90)" font-size="10.51" fill="#92d2ee">{</text>
<text transform="translate(221.7 278.14) rotate(90)" font-size="10.01" letter-spacing="0.006" fill="#ffb01c" stroke="#ffb01c" stroke-width="0">SiIV</text>
<text transform="translate(221.7 300.4) rotate(90)" font-size="10.51" fill="#ffb01c">{</text>
<text transform="translate(240.8 280.05) rotate(90)" font-size="10.01" letter-spacing="0.011" fill="#5a7de6" stroke="#5a7de6" stroke-width="0">OII</text>
<text transform="translate(240.8 300.4) rotate(90)" font-size="10.51" fill="#5a7de6">{</text>
<text transform="translate(1017.3 281.14) rotate(90)" font-size="10.01" letter-spacing="-0.047" fill="#ffb01c" stroke="#ffb01c" stroke-width="0">CIII</text>
<text transform="translate(1017.3 300.4) rotate(90)" font-size="10.51" fill="#ffb01c">{</text>
<text transform="translate(1267.8 280.28) rotate(90)" font-size="10.01" letter-spacing="0.030" fill="#92d2ee" stroke="#92d2ee" stroke-width="0">OIII</text>
<text transform="translate(1267.8 300.4) rotate(90)" font-size="10.51" fill="#92d2ee">{</text>
</g>
<rect x="101.3" y="348.4" width="1198.3" height="84" fill="#fff"/>
<clipPath id="spclip"><rect x="101.3" y="348.4" width="1198.3" height="84"/></clipPath>
<g clip-path="url(#spclip)">
<rect x="574.3" y="348.4" width="54.6" height="84" fill="#bfbc00"/>
<polygon points="100.35 434.4 100.35 377.52 102.71 377.51 105.07 376.86 107.42 377.92 109.78 377.15 112.13 377.9 114.49 377.15 116.85 379.22 119.2 380.56 121.56 382.97 123.91 383.01 126.27 383.62 128.63 383.92 130.98 383.07 133.34 383.04 135.69 382.19 138.05 381.42 140.41 381.38 142.76 381.28 145.12 380.77 147.47 383.97 149.83 386.64 152.19 388.81 154.54 389.77 156.9 389.87 159.25 390.01 161.61 389.31 163.97 390.17 166.32 390.26 168.68 390.8 171.03 391.03 173.39 392.54 175.75 393.39 178.1 391.06 180.46 391.23 182.81 389.6 185.17 389.52 187.53 389.23 189.88 390.66 192.24 391.5 194.59 390.7 196.95 391.43 199.31 391.75 201.66 391.84 204.02 392.31 206.37 392.68 208.73 393.32 211.09 394.13 213.44 395.48 215.8 397.43 218.15 399.02 220.51 397.89 222.87 397.27 225.22 397.1 227.58 396.18 229.93 396 232.29 396.76 234.65 397.2 237 397.36 239.36 396.64 241.71 395.81 244.07 395.69 246.43 393.56 248.78 393.3 251.14 394.2 253.49 394.5 255.85 395.7 258.21 396.76 260.56 397.15 262.92 397.41 265.27 398.71 267.63 399.03 269.99 399.51 272.34 400.45 274.7 400.07 277.05 399.42 279.41 400.1 281.77 399.4 284.12 398.64 286.48 398.54 288.83 398.81 291.19 399.9 293.55 398.6 295.9 399.46 298.26 399.59 300.61 399.9 302.97 400.9 305.33 401.01 307.68 401.14 310.04 400.27 312.39 401.5 314.75 401.54 317.11 401.79 319.46 401.71 321.82 401.95 324.17 402.25 326.53 403 328.89 403.46 331.24 402.07 333.6 401.82 335.95 401.27 338.31 401.49 340.67 401.42 343.02 400.81 345.38 401.26 347.73 402.39 350.09 403.7 352.45 404.55 354.8 405.23 357.16 405.34 359.51 404.85 361.87 404.82 364.23 404.45 366.58 403.85 368.94 402.94 371.29 403.6 373.65 403.82 376.01 404.81 378.36 405.12 380.72 406.25 383.07 407.15 385.43 406.46 387.79 406.06 390.14 404.51 392.5 403.12 394.85 404.01 397.21 404.22 399.57 405.27 401.92 406.39 404.28 405.66 406.63 405.64 408.99 404.95 411.35 404.8 413.7 404.7 416.06 405.93 418.41 404.78 420.77 405.4 423.13 405.64 425.48 405.23 427.84 404.31 430.19 403.46 432.55 403.95 434.91 404.7 437.26 406.28 439.62 406.71 441.97 406.11 444.33 406.33 446.69 406.78 449.04 406.37 451.4 406.48 453.75 406.33 456.11 405.55 458.47 406.05 460.82 405.51 463.18 405.72 465.53 406.21 467.89 405.79 470.25 404.61 472.6 405.59 474.96 405.73 477.31 405.1 479.67 405.7 482.03 405.92 484.38 405.58 486.74 406.94 489.09 406.34 491.45 407.06 493.81 407.19 496.16 406.97 498.52 406.26 500.87 406.73 503.23 407.35 505.59 407.08 507.94 406.13 510.3 406.31 512.65 407.08 515.01 405.8 517.37 406.81 519.72 407.11 522.08 406.71 524.43 406.28 526.79 405.99 529.15 406.16 531.5 406.64 533.86 406.65 536.21 406.93 538.57 406.38 540.93 406.53 543.28 406.18 545.64 406.69 547.99 406.37 550.35 406.46 552.71 406.54 555.06 406.49 557.42 406.38 559.77 406.4 562.13 405.8 564.49 406 566.84 406.55 569.2 405.92 571.55 406.03 573.91 405.64 576.27 406.27 578.62 406.31 580.98 406.5 583.33 406.21 585.69 406.07 588.05 406.19 590.4 406.35 592.76 406.05 595.11 406.22 597.47 406.16 599.83 406.59 602.18 406.18 604.54 406.62 606.89 406.56 609.25 406.19 611.61 405.49 613.96 405.89 616.32 406.25 618.67 406.32 621.03 405.89 623.39 405.75 625.74 405.81 628.1 406.32 630.45 406.18 632.81 406.37 635.17 406.36 637.52 406.56 639.88 406.17 642.23 406.52 644.59 405.84 646.95 404.9 649.3 405.05 651.66 404.52 654.01 405.53 656.37 405.53 658.73 405.6 661.08 406.46 663.44 406.53 665.79 405.4 668.15 406.57 670.51 406.61 672.86 406.59 675.22 406.4 677.57 406.45 679.93 406.11 682.29 406.21 684.64 406.67 687 406.68 689.35 407.09 691.71 407.15 694.07 406.91 696.42 406.4 698.78 406.64 701.13 406.39 703.49 406.35 705.85 406.76 708.2 405.94 710.56 406.9 712.91 406.94 715.27 406.87 717.63 406.31 719.98 406.77 722.34 407 724.69 406.57 727.05 406.33 729.41 406.78 731.76 406.84 734.12 406.36 736.47 406.4 738.83 406.42 741.19 407.04 743.54 406.67 745.9 406.64 748.25 407.43 750.61 406.35 752.97 406.75 755.32 406.92 757.68 405.97 760.03 406.75 762.39 407.07 764.75 406.83 767.1 406.61 769.46 406.52 771.81 406.84 774.17 407.14 776.53 407.09 778.88 407.13 781.24 407.22 783.59 406.85 785.95 407.03 788.31 406.84 790.66 407.16 793.02 407.18 795.37 406.94 797.73 407 800.09 406.46 802.44 407.21 804.8 406.81 807.15 406.91 809.51 407.37 811.87 406.64 814.22 406.84 816.58 407.67 818.93 406.7 821.29 406.58 823.65 407.21 826 406.31 828.36 406.88 830.71 407.36 833.07 406.74 835.43 407.08 837.78 407.44 840.14 407.73 842.49 406.87 844.85 407.23 847.21 406.74 849.56 406.83 851.92 407.17 854.27 407.18 856.63 406.35 858.99 406.37 861.34 406.72 863.7 407.13 866.05 407.36 868.41 407.15 870.77 406.41 873.12 406.85 875.48 407.13 877.83 407.47 880.19 406.97 882.55 407.36 884.9 407.04 887.26 406.78 889.61 406.66 891.97 407 894.33 407.18 896.68 406.98 899.04 406.42 901.39 406.94 903.75 407.58 906.11 406.52 908.46 407 910.82 405.83 913.17 407.27 915.53 407.13 917.89 407.21 920.24 406.97 922.6 407.32 924.95 407.65 927.31 407.82 929.67 407.17 932.02 407.32 934.38 407.35 936.73 406.37 939.09 406.86 941.45 406.76 943.8 407.34 946.16 407.05 948.51 407.24 950.87 407.24 953.23 406.9 955.58 406.96 957.94 407.07 960.29 407.13 962.65 407.71 965.01 407.46 967.36 407.06 969.72 407.34 972.07 407.49 974.43 407.09 976.79 407.55 979.14 407.47 981.5 406.91 983.85 407.36 986.21 406.72 988.57 407.05 990.92 406.95 993.28 406.84 995.63 408.02 997.99 407.26 1000.35 407.69 1002.7 407.39 1005.06 407.25 1007.41 406.76 1009.77 407.22 1012.13 406.61 1014.48 407.38 1016.84 407.21 1019.19 407.15 1021.55 406.84 1023.91 407.19 1026.26 407.39 1028.62 407.28 1030.97 407.66 1033.33 406.7 1035.69 406.87 1038.04 406.98 1040.4 407.03 1042.75 407.34 1045.11 407.27 1047.47 406.82 1049.82 407.39 1052.18 407.39 1054.53 406.53 1056.89 406.53 1059.25 406.98 1061.6 406.89 1063.96 407.01 1066.31 406.56 1068.67 407.22 1071.03 407.03 1073.38 406.88 1075.74 406.53 1078.09 407.13 1080.45 406.95 1082.81 407.21 1085.16 407.26 1087.52 407.25 1089.87 406.98 1092.23 406.69 1094.59 407.25 1096.94 407.21 1099.3 407.14 1101.65 406.86 1104.01 406.73 1106.37 407.42 1108.72 406.84 1111.08 407.32 1113.43 406.71 1115.79 407.32 1118.15 407.36 1120.5 407.23 1122.86 407 1125.21 407.34 1127.57 406.91 1129.93 406.94 1132.28 406.96 1134.64 406.9 1136.99 406.68 1139.35 407.26 1141.71 407 1144.06 407.02 1146.42 407.74 1148.77 406.87 1151.13 407.29 1153.49 407.27 1155.84 407.18 1158.2 406.99 1160.55 406.91 1162.91 406.86 1165.27 407.28 1167.62 406.79 1169.98 406.89 1172.33 407.18 1174.69 407.05 1177.05 406.76 1179.4 406.89 1181.76 406.8 1184.11 407.02 1186.47 406.65 1188.83 406.27 1191.18 406.9 1193.54 407.64 1195.89 406.45 1198.25 407.27 1200.61 407.57 1202.96 407.92 1205.32 406.93 1207.67 406.69 1210.03 406.73 1212.39 407.22 1214.74 406.58 1217.1 407.12 1219.45 407.31 1221.81 407.08 1224.17 407.03 1226.52 407.09 1228.88 406.97 1231.23 407.9 1233.59 406.58 1235.95 407.35 1238.3 406.93 1240.66 407.45 1243.01 407.12 1245.37 407.25 1247.73 407.77 1250.08 407.08 1252.44 407 1254.79 407.63 1257.15 407.99 1259.51 407.49 1261.86 407.57 1264.22 407.24 1266.57 407.3 1268.93 406.73 1271.29 407.09 1273.64 407.42 1276 407.28 1278.35 408.38 1280.71 407.68 1283.07 407.7 1285.42 407.42 1287.78 407.6 1290.13 408.35 1292.49 409.58 1294.85 412.13 1297.2 420.9 1297.2 434.4" fill="#7e7e7e" fill-opacity="0.5"/>
<line x1="101.3" y1="420.9" x2="1299.6" y2="420.9" stroke="#757575" stroke-width="1.4"/>
<rect x="129.5" y="347.4" width="11.8" height="86" fill="#787878" fill-opacity="0.6" stroke="#222" stroke-width="0.9"/>
<path d="M129.5 366.3L141.3 357.1M129.5 389.9L141.3 380.7M129.5 413.5L141.3 404.3M129.5 437.1L141.3 427.9" stroke="#222" stroke-width="0.9" fill="none"/>
<rect x="1260.4" y="347.4" width="6.5" height="86" fill="#787878" fill-opacity="0.6" stroke="#222" stroke-width="0.9"/>
<path d="M1260.4 356.9L1266.9 351.83M1260.4 380.5L1266.9 375.43M1260.4 404.1L1266.9 399.03M1260.4 427.7L1266.9 422.63" stroke="#222" stroke-width="0.9" fill="none"/>
<line x1="601.6" y1="348.4" x2="601.6" y2="432.4" stroke="#222" stroke-width="1.0" stroke-dasharray="2.4 1.2"/>
<polyline points="102.36 382.83 103.97 352.14 106.42 391.33 107.55 360.16 108.97 396.99 110.2 391.33 112.28 413.52 115.58 378.58 116.81 406.43 118.13 375.75 120.3 407.38 121.72 378.58 122.85 395.1 124.08 395.1 125.02 398.88 126.44 436.65 127.57 411.16 128.33 436.65 130.03 352.14 131.63 412.1 132.58 386.6 134.47 364.41 135.88 430.04 138.05 368.19 140.42 405.49 141.55 364.89 142.97 436.65 143.91 404.55 145.14 420.6 147.69 387.55 148.63 410.21 150.05 353.08 151.46 399.82 152.41 394.16 153.35 398.88 154.77 376.22 155.71 390.38 156.94 374.8 158.07 386.6 159.3 436.65 160.43 383.3 162.32 396.05 164.21 376.22 165.16 375.75 166.38 364.89 168.46 410.21 170.07 394.16 171.29 417.77 172.43 374.8 174.13 401.71 175.54 429.57 176.96 379.52 178.19 383.77 179.51 413.52 180.74 401.71 183.1 436.65 184.7 390.38 185.46 389.91 186.4 436.65 187.63 364.89 188.76 421.54 189.91 373.86 191.14 436.65 192.37 378.58 193.31 388.49 194.44 380.47 196.8 427.21 198.22 401.71 199.64 427.68 201.71 378.11 203.41 430.51 204.83 430.51 209.74 383.77 210.97 436.65 212.2 432.87 213.33 395.1 214.75 428.15 215.97 396.99 217.58 426.26 219.47 436.65 220.69 411.16 222.77 426.74 224 384.24 225.13 403.6 226.36 379.05 228.63 429.1 229.95 365.36 232.21 417.77 233.44 397.46 236.75 436.65 238.16 370.08 239.3 408.32 240.43 393.21 241.66 420.6 242.88 377.16 245.43 412.1 247.32 404.55 248.93 376.69 251.1 436.65 252.33 396.05 253.93 416.82 256.95 405.49 259.6 418.24 260.83 395.58 261.68 402.66 264.13 374.8 265.74 404.55 266.68 399.35 269.04 408.8 271.13 392.74 272.08 401.71 273.12 399.35 274.72 418.24 278.31 379.52 280.58 407.38 283.03 387.55 287.47 432.4 290.77 375.75 292.19 395.1 293.42 375.27 295.97 404.55 298.33 372.44 299.56 420.13 300.69 395.1 302.58 397.46 304.18 416.82 306.64 371.97 307.77 391.8 308.9 393.21 310.13 423.43 311.36 397.94 312.49 424.38 313.63 384.24 314.85 415.41 317.21 389.91 319.58 394.63 321.46 393.21 322.88 381.41 325.71 418.71 326.66 413.04 328.73 416.82 329.96 427.21 331.38 399.35 332.32 406.43 333.46 382.36 334.68 379.05 335.82 375.27 337.04 400.77 340.35 385.19 342.9 415.41 346.49 372.91 347.62 393.21 348.85 379.52 350.26 410.21 353.57 388.97 358.29 408.8 360.65 392.27 362.07 401.71 364.15 389.44 367.36 396.99 370.19 390.38 373.5 411.16 375.86 387.08 379.64 402.66 382 393.69 386.53 413.52 388.89 375.27 390.5 402.66 392.67 412.57 394.56 402.66 396.92 421.54 398.52 398.41 400.88 394.16 403.05 389.91 405.6 409.74 407.97 398.88 408.91 403.13 410.33 383.77 412.21 396.99 413.63 422.49 415.8 407.85 418.35 418.71 420.24 413.52 423.07 392.27 425.43 415.88 429.97 383.77 432.99 402.66 434.88 396.99 438.65 407.38 439.6 400.77 440.83 411.16 443.09 382.36 445.45 416.82 447.63 384.72 449.04 383.77 450.17 373.86 451.87 405.49 453.57 400.77 454.71 409.27 457.07 400.77 459.71 413.99 461.89 402.66 463.31 399.82 465.48 381.88 468.5 407.38 470.39 396.05 472.09 402.66 473.98 379.99 477.47 402.66 478.6 398.41 480.3 405.02 481.72 397.46 483.61 413.04 485.02 413.99 486.44 418.24 488.05 407.38 490.22 405.49 491.16 408.32 492.77 395.1 495.13 411.16 496.36 410.68 498.24 418.24 500.79 394.63 502.97 412.57 504.85 395.58 506.27 396.05 508.16 410.21 510.05 402.66 512.41 411.16 514.01 394.16 514.96 401.71 516.19 396.52 517.13 405.96 518.55 391.8 521.85 411.16 524.21 397.94 526.57 392.27 527.99 402.19 531.29 394.63 532.52 404.55 533.65 396.05 535.54 401.71 537.43 409.27 539.51 399.82 540.74 408.8 542.15 394.16 543.57 401.71 545.93 410.68 547.82 411.16 549.71 397.46 552.54 414.46 553.77 391.33 554.9 402.66 556.32 396.99 559.15 395.1 561.05 394.55 562.1 386.16 563.15 388.25 565.24 378.81 566.82 381.96 569.97 423.39 571.75 402.94 572.73 395.59 573.91 377.39 575.09 404.9 576.27 397.58 577.44 418.45 578.62 389.05 579.8 395.94 580.98 403.3 582.16 412.17 583.33 397.48 584.51 412.33 585.69 404.9 586.87 396.48 588.05 406.74 589.22 397.18 590.4 402.61 591.58 399.17 592.76 410.19 593.94 403.14 595.11 399.78 596.29 382.51 597.47 382.65 598.65 393.2 599.83 405.74 601 380.94 602.18 385.17 603.36 384.92 604.54 391.66 605.72 384.55 606.89 383.86 608.07 403.14 609.25 402.84 610.43 425.56 611.61 399.93 612.78 393.2 613.96 409.67 615.14 385.21 616.32 415.92 617.5 403.75 618.67 403.75 619.85 398.25 621.03 391.37 622.21 393.36 623.39 394.96 624.56 417.84 625.74 399.31 626.92 399.85 628.1 399 629.28 385.92 630.45 396.87 631.42 384.24 632.74 422.96 634.92 373.38 636.33 410.21 637.75 384.72 638.5 391.33 639.64 368.19 641.05 415.41 643.41 382.36 644.36 387.55 645.59 379.52 647.19 392.74 649.55 399.82 652.38 402.66 653.8 413.52 656.16 400.77 657.86 409.27 659.94 402.19 660.88 410.21 662.11 381.41 663.24 411.16 664.66 396.05 666.83 377.63 668.25 405.49 670.8 384.24 673.16 413.04 674.1 403.6 675.99 413.04 677.88 381.88 680.71 411.16 682.6 398.41 684.49 405.02 686.85 394.16 688.08 405.02 689.21 379.05 690.63 398.88 692.33 387.55 694.41 399.82 695.07 397.46 696.77 410.21 697.9 405.49 698.65 408.8 700.26 392.74 702.43 406.43 705.55 392.74 706.96 420.6 708.1 384.72 710.27 400.77 711.69 392.74 713.76 420.6 714.99 389.44 717.07 396.99 718.3 395.1 720 405.02 722.08 397.94 725.67 407.38 728.03 395.1 730.2 392.74 732.75 421.54 735.11 392.27 737.47 394.63 738.41 400.3 740.77 379.52 742.66 395.58 745.5 395.1 747.86 385.19 750.22 400.77 751.63 392.27 753.71 402.19 754.94 395.1 757.49 414.93 759.66 389.44 762.02 391.8 763.91 400.77 765.8 407.38 768.35 389.91 770.99 405.49 772.88 399.82 775.24 399.35 777.41 387.08 779.96 413.52 783.27 397.94 784.68 405.49 787.04 388.49 789.41 396.99 791.58 413.52 793.94 386.6 797.43 405.49 799.79 392.74 803.29 411.16 804.99 384.72 806.12 387.55 807.35 384.72 810.46 414.93 813.01 395.1 813.96 400.3 815 389.44 816.42 413.99 818.31 397.46 820.19 405.49 822.08 402.19 824.44 410.21 826.33 400.77 828.22 413.52 830.58 388.02 832 397.46 834.83 384.24 837.19 396.99 838.42 398.41 839.74 392.74 841.91 405.02 843.8 407.38 845.97 394.16 849.47 402.19 850.88 396.99 852.3 397.94 854.19 417.77 857.49 402.66 858.63 409.27 860.14 396.05 861.46 406.43 864.58 392.27 865.99 409.27 868.07 392.74 870.52 413.99 872.79 396.52 874.3 405.49 876.57 392.27 877.8 407.38 879.21 399.35 882.04 384.72 883.93 401.71 885.82 386.6 888.18 411.16 889.6 406.43 890.54 411.16 892.43 401.71 894.13 385.66 896.68 407.38 898.57 388.49 899.99 413.99 902.35 398.41 903.57 408.8 906.12 389.44 909.43 398.88 910.47 402.66 911.7 413.52 915.19 386.13 916.61 396.99 918.5 393.21 919.92 389.91 922.09 399.35 924.16 389.91 925.11 394.16 927 381.41 928.41 397.46 931.25 393.21 933.89 376.69 935.31 385.66 937.57 372.44 939.27 390.38 940.03 388.97 941.35 398.88 943.24 392.74 944.75 397.46 945.88 392.74 948.24 411.16 949.47 389.44 950.6 407.38 951.55 393.21 953.44 401.71 955.33 402.19 957.21 405.96 959.58 387.08 961.18 396.99 962.41 381.41 963.82 389.91 964.77 390.85 968.55 415.88 970.91 394.63 971.85 395.58 972.98 379.05 974.4 399.82 976.57 379.52 977.99 382.83 981.29 398.41 983.18 395.1 985.07 393.21 986.96 378.58 989.32 403.6 990.45 407.85 992.63 396.99 994.04 396.99 995.27 392.27 997.63 412.1 998.76 376.22 1001.12 395.1 1003.48 386.13 1006.89 403.6 1009.53 371.02 1012.08 394.16 1013.31 394.63 1014.92 401.71 1017.28 398.41 1018.98 387.08 1021.24 403.6 1022.47 397.46 1023.41 400.3 1024.83 388.97 1026.25 388.97 1028.61 395.58 1030.68 386.6 1032.86 403.13 1035.41 371.97 1036.92 401.24 1037.58 392.27 1038.99 410.68 1040.41 387.08 1042.3 382.83 1044.66 377.16 1047.02 387.08 1048.25 384.72 1050.14 395.58 1051.74 396.05 1052.97 379.52 1054.1 399.82 1055.33 384.72 1057.41 392.27 1059.01 388.49 1062.6 398.88 1064.77 410.21 1067.32 388.97 1068.08 390.38 1069.49 374.8 1071.86 392.27 1072.99 386.6 1074.41 389.91 1076.29 383.3 1077.9 396.05 1080.07 394.63 1081.49 378.11 1083.38 379.99 1084.79 385.66 1086.02 373.38 1088.29 397.46 1089.99 397.46 1090.74 392.74 1091.87 403.6 1093.29 394.16 1095.18 401.71 1096.78 392.27 1098.48 394.16 1100 391.33 1102.83 383.77 1103.78 386.6 1105.19 379.05 1106.14 386.13 1107.37 365.83 1108.69 387.55 1109.92 387.55 1112.09 398.41 1114.35 371.5 1115.58 380.94 1116.53 379.52 1118.13 407.85 1120.02 382.36 1121.25 398.88 1122.47 386.13 1124.74 408.32 1126.44 398.41 1127.2 400.3 1128.52 392.74 1130.41 396.52 1132.86 381.41 1134.47 395.1 1137.77 376.69 1139 388.97 1140.13 384.72 1142.02 388.97 1143.63 373.38 1146.27 377.63 1148.35 396.99 1149.58 376.22 1150.99 382.36 1151.75 377.63 1152.88 389.91 1154.3 377.63 1155.52 388.49 1156.66 382.36 1159.02 391.8 1160.43 377.16 1161.57 381.41 1163.27 376.69 1164.68 383.3 1166.1 376.69 1167.99 382.36 1170.35 378.11 1171.95 397.46 1173.18 382.36 1174.6 382.36 1178.38 376.22 1179.79 377.63 1181.21 373.86 1183.57 382.83 1186.12 365.83 1188.48 394.16 1190.65 366.3 1192.54 382.36 1194.15 396.52 1195 374.33 1196.13 376.22 1198.78 391.33 1201.14 374.8 1203.69 387.08 1209.16 380.94 1211.81 380.47 1213.13 373.38 1214.83 389.44 1216.91 370.08 1217.95 372.44 1219.08 369.61 1220.31 395.1 1221.63 385.66 1223.61 396.05 1225.03 379.99 1226.16 388.49 1229.47 378.11 1231.83 392.74 1235.13 376.22 1236.55 394.63 1237.97 374.8 1239.85 373.86 1241.74 383.3 1243.16 378.11 1244.58 381.41 1248.35 394.16 1249.96 378.58 1251.19 383.77 1254.3 375.27 1256.57 385.66 1257.8 364.89 1260.63 387.08 1262.23 368.19 1263.93 383.3 1265.35 373.86 1266.77 376.22 1269.13 386.6 1269.6 381.41 1271.02 394.63 1273.38 373.38 1275.45 389.91 1279.23 370.08 1280.46 377.63 1282.35 379.52 1284.71 391.33 1286.6 386.13 1288.48 393.69 1289.71 386.6 1291.98 395.1 1293.68 383.3 1295.57 379.99 1296.79 384.72 1298.87 386.13" fill="none" stroke="#0000ff" stroke-width="1.4" stroke-linejoin="round"/>
</g>
<rect x="101.3" y="348.4" width="1198.3" height="84" fill="none" stroke="#333" stroke-width="1.1"/>
<text x="96.23" y="447.3" font-size="10.01" letter-spacing="0.616" fill="#111111" stroke="#111111" stroke-width="0.23">3500</text>
<text x="155.13" y="447.3" font-size="10.01" letter-spacing="0.616" fill="#111111" stroke="#111111" stroke-width="0.23">3600</text>
<text x="214.03" y="447.3" font-size="10.01" letter-spacing="0.616" fill="#111111" stroke="#111111" stroke-width="0.23">3700</text>
<text x="272.93" y="447.3" font-size="10.01" letter-spacing="0.616" fill="#111111" stroke="#111111" stroke-width="0.23">3800</text>
<text x="331.83" y="447.3" font-size="10.01" letter-spacing="0.616" fill="#111111" stroke="#111111" stroke-width="0.23">3900</text>
<text x="390.73" y="447.3" font-size="10.01" letter-spacing="0.616" fill="#111111" stroke="#111111" stroke-width="0.23">4000</text>
<text x="449.63" y="447.3" font-size="10.01" letter-spacing="0.616" fill="#111111" stroke="#111111" stroke-width="0.23">4100</text>
<text x="508.53" y="447.3" font-size="10.01" letter-spacing="0.616" fill="#111111" stroke="#111111" stroke-width="0.23">4200</text>
<text x="567.43" y="447.3" font-size="10.01" letter-spacing="0.616" fill="#111111" stroke="#111111" stroke-width="0.23">4300</text>
<text x="626.33" y="447.3" font-size="10.01" letter-spacing="0.616" fill="#111111" stroke="#111111" stroke-width="0.23">4400</text>
<text x="685.23" y="447.3" font-size="10.01" letter-spacing="0.616" fill="#111111" stroke="#111111" stroke-width="0.23">4500</text>
<text x="744.13" y="447.3" font-size="10.01" letter-spacing="0.616" fill="#111111" stroke="#111111" stroke-width="0.23">4600</text>
<text x="803.03" y="447.3" font-size="10.01" letter-spacing="0.616" fill="#111111" stroke="#111111" stroke-width="0.23">4700</text>
<text x="861.93" y="447.3" font-size="10.01" letter-spacing="0.616" fill="#111111" stroke="#111111" stroke-width="0.23">4800</text>
<text x="920.83" y="447.3" font-size="10.01" letter-spacing="0.616" fill="#111111" stroke="#111111" stroke-width="0.23">4900</text>
<text x="979.73" y="447.3" font-size="10.01" letter-spacing="0.616" fill="#111111" stroke="#111111" stroke-width="0.23">5000</text>
<text x="1038.63" y="447.3" font-size="10.01" letter-spacing="0.616" fill="#111111" stroke="#111111" stroke-width="0.23">5100</text>
<text x="1097.53" y="447.3" font-size="10.01" letter-spacing="0.616" fill="#111111" stroke="#111111" stroke-width="0.23">5200</text>
<text x="1156.43" y="447.3" font-size="10.01" letter-spacing="0.616" fill="#111111" stroke="#111111" stroke-width="0.23">5300</text>
<text x="1215.33" y="447.3" font-size="10.01" letter-spacing="0.616" fill="#111111" stroke="#111111" stroke-width="0.23">5400</text>
<text x="1274.23" y="447.3" font-size="10.01" letter-spacing="0.616" fill="#111111" stroke="#111111" stroke-width="0.23">5500</text>
<text x="88.82" y="424.5" font-size="10.01" letter-spacing="0.616" fill="#111111" stroke="#111111" stroke-width="0.23">0</text>
<text x="88.82" y="396.06" font-size="10.01" letter-spacing="0.616" fill="#111111" stroke="#111111" stroke-width="0.23">2</text>
<text x="88.82" y="367.62" font-size="10.01" letter-spacing="0.616" fill="#111111" stroke="#111111" stroke-width="0.23">4</text>
<path d="M108.6 432.4v3.6M167.5 432.4v3.6M226.4 432.4v3.6M285.3 432.4v3.6M344.2 432.4v3.6M403.1 432.4v3.6M462 432.4v3.6M520.9 432.4v3.6M579.8 432.4v3.6M638.7 432.4v3.6M697.6 432.4v3.6M756.5 432.4v3.6M815.4 432.4v3.6M874.3 432.4v3.6M933.2 432.4v3.6M992.1 432.4v3.6M1051 432.4v3.6M1109.9 432.4v3.6M1168.8 432.4v3.6M1227.7 432.4v3.6M1286.6 432.4v3.6M101.3 420.9h-3.6M101.3 392.46h-3.6M101.3 364.02h-3.6" stroke="#333" stroke-width="0.9" fill="none"/>
<text x="108.9" y="346" font-size="10.61" letter-spacing="0.437" fill="#111111" stroke="#111111" stroke-width="0.25">e</text>
<text x="115.2" y="341.7" font-size="7.42" letter-spacing="0.872" fill="#111111" stroke="#111111" stroke-width="0.16">−17</text>
<text x="129.3" y="346" font-size="10.61" letter-spacing="0.722" fill="#111111" stroke="#111111" stroke-width="0.25">x2</text>
<text x="141.4" y="346" font-size="10.61" letter-spacing="-0.030" fill="#111111" stroke="#111111" stroke-width="0.25" font-style="italic">Å</text>
<rect x="454.3" y="449.8" width="17.5" height="6.3" fill="#ff0000"/>
<text x="478" y="456" font-size="7.87" letter-spacing="0.181" fill="#111111" stroke="#111111" stroke-width="0.17">Lyα</text>
<rect x="508" y="449.8" width="17.5" height="6.3" fill="#008000"/>
<text x="531.7" y="456" font-size="7.87" letter-spacing="0.009" fill="#111111" stroke="#111111" stroke-width="0.17">OII</text>
<rect x="561.2" y="449.8" width="17.5" height="6.3" fill="#8a2be2"/>
<text x="584.9" y="456" font-size="7.87" letter-spacing="-0.101" fill="#111111" stroke="#111111" stroke-width="0.17">CIV</text>
<rect x="615.8" y="449.8" width="17.5" height="6.3" fill="#800080"/>
<text x="639.5" y="456" font-size="7.87" letter-spacing="-0.037" fill="#111111" stroke="#111111" stroke-width="0.17">CIII</text>
<rect x="667.5" y="449.8" width="17.5" height="6.3" fill="#ff00ff"/>
<text x="691.2" y="456" font-size="7.87" letter-spacing="0.161" fill="#111111" stroke="#111111" stroke-width="0.17">MgII</text>
<rect x="723.4" y="449.8" width="17.5" height="6.3" fill="#4169e1"/>
<text x="747.1" y="456" font-size="7.87" letter-spacing="0.324" fill="#111111" stroke="#111111" stroke-width="0.17">Hγ</text>
<rect x="774.3" y="449.8" width="17.5" height="6.3" fill="#ffa500"/>
<text x="798" y="456" font-size="7.87" letter-spacing="0.130" fill="#111111" stroke="#111111" stroke-width="0.17">HeII</text>
<rect x="828.6" y="449.8" width="17.5" height="6.3" fill="#87ceeb"/>
<text x="852.3" y="456" font-size="7.87" letter-spacing="0.082" fill="#111111" stroke="#111111" stroke-width="0.17">(K)CaII</text>
<rect x="895" y="449.8" width="17.5" height="6.3" fill="#87ceeb"/>
<text x="918.7" y="456" font-size="7.87" letter-spacing="0.125" fill="#111111" stroke="#111111" stroke-width="0.17">(H)CaII</text>
</svg>
<svg width="1400" height="953" viewBox="0 0 1400 953">
<defs>
<filter id="bgn" x="0" y="0" width="100%" height="100%" color-interpolation-filters="sRGB">
<feTurbulence type="fractalNoise" baseFrequency="0.22" numOctaves="2" seed="4" result="t"/>
<feColorMatrix in="t" type="matrix" values="0.3 0 0 0 0.775  0.3 0 0 0 0.775  0.3 0 0 0 0.775  0 0 0 0 1"/>
</filter>
<filter id="bgn2" x="0" y="0" width="100%" height="100%" color-interpolation-filters="sRGB">
<feTurbulence type="fractalNoise" baseFrequency="0.22" numOctaves="2" seed="9" result="t"/>
<feColorMatrix in="t" type="matrix" values="0.3 0 0 0 0.775  0.3 0 0 0 0.775  0.3 0 0 0 0.775  0 0 0 0 1"/>
</filter>
<radialGradient id="gal" cx="0.5" cy="0.5" r="0.5">
<stop offset="0" stop-color="#000" stop-opacity="1"/><stop offset="0.18" stop-color="#000" stop-opacity="0.93"/>
<stop offset="0.38" stop-color="#000" stop-opacity="0.6"/><stop offset="0.6" stop-color="#000" stop-opacity="0.28"/>
<stop offset="0.8" stop-color="#000" stop-opacity="0.1"/><stop offset="1" stop-color="#000" stop-opacity="0"/>
</radialGradient>
<filter id="blur3" x="-20%" y="-20%" width="140%" height="140%"><feGaussianBlur stdDeviation="5"/></filter>
<filter id="blur2" x="-30%" y="-30%" width="160%" height="160%"><feGaussianBlur stdDeviation="3.2"/></filter>
<filter id="blur1" x="-30%" y="-30%" width="160%" height="160%"><feGaussianBlur stdDeviation="2.0"/></filter>
</defs>
<clipPath id="c0"><rect x="70" y="532.7" width="148" height="147.7"/></clipPath>
<g clip-path="url(#c0)">
<rect x="70" y="532.7" width="148" height="147.7" filter="url(#bgn)"/>
<g transform="translate(142.5 608.05) rotate(-32)"><ellipse cx="0" cy="0" rx="50" ry="27" fill="url(#gal)"/><ellipse cx="-2" cy="1" rx="24" ry="14" fill="url(#gal)"/></g>
</g>
<g fill="none" stroke="#787878" stroke-width="1.05"><circle cx="118.19" cy="562.27" r="12.2"/><circle cx="140.88" cy="565.57" r="12.2"/><circle cx="165.11" cy="570.42" r="12.2"/><circle cx="189.34" cy="573.94" r="12.2"/><circle cx="101.67" cy="580.55" r="12.2"/><circle cx="126.34" cy="585.4" r="12.2"/><circle cx="173.26" cy="592.67" r="12.2"/><circle cx="197.49" cy="597.07" r="12.2"/><circle cx="110.93" cy="603.46" r="12.2"/><circle cx="183.17" cy="615.13" r="12.2"/><circle cx="95.07" cy="621.3" r="12.2"/><circle cx="119.74" cy="626.15" r="12.2"/><circle cx="166.65" cy="633.41" r="12.2"/><circle cx="190.44" cy="637.82" r="12.2"/><circle cx="104.32" cy="644.21" r="12.2"/><circle cx="127.67" cy="648.17" r="12.2"/><circle cx="151.23" cy="653.02" r="12.2"/></g>
<rect x="95.14" y="557.69" width="98.31" height="98.31" fill="none" stroke="#ff0000" stroke-width="1.35"/>
<circle cx="134.3" cy="606.55" r="12.3" fill="none" stroke="#0000ff" stroke-width="1.5"/>
<circle cx="158.47" cy="611.81" r="12.3" fill="none" stroke="#00ff00" stroke-width="1.5"/>
<circle cx="150.08" cy="588.3" r="12.3" fill="none" stroke="#ffa500" stroke-width="1.5"/>
<circle cx="143.51" cy="629.57" r="12.3" fill="none" stroke="#ff0000" stroke-width="1.5"/>
<path d="M141 606.85h6M144 603.85v6" stroke="#ff0000" stroke-width="1.1"/>
<text x="140.36" y="546.2" font-size="10.01" letter-spacing="0.041" fill="#ff0000" stroke="#ff0000" stroke-width="0.23">N</text>
<text x="76.53" y="610" font-size="10.01" letter-spacing="-0.536" fill="#ff0000" stroke="#ff0000" stroke-width="0.23">E</text>
<rect x="70" y="532.7" width="148" height="147.7" fill="none" stroke="#333" stroke-width="1.1"/>
<text x="70.65" y="695.3" font-size="10.61" letter-spacing="1.544" fill="#111111" stroke="#111111" stroke-width="0.25">−4</text>
<text x="47.62" y="676.11" font-size="10.61" letter-spacing="1.544" fill="#111111" stroke="#111111" stroke-width="0.25">−4</text>
<text x="103.53" y="695.3" font-size="10.61" letter-spacing="1.544" fill="#111111" stroke="#111111" stroke-width="0.25">−2</text>
<text x="47.62" y="643.23" font-size="10.61" letter-spacing="1.544" fill="#111111" stroke="#111111" stroke-width="0.25">−2</text>
<text x="140.72" y="695.3" font-size="10.61" letter-spacing="0.653" fill="#111111" stroke="#111111" stroke-width="0.25">0</text>
<text x="56.25" y="610.35" font-size="10.61" letter-spacing="0.653" fill="#111111" stroke="#111111" stroke-width="0.25">0</text>
<text x="173.6" y="695.3" font-size="10.61" letter-spacing="0.653" fill="#111111" stroke="#111111" stroke-width="0.25">2</text>
<text x="56.25" y="577.47" font-size="10.61" letter-spacing="0.653" fill="#111111" stroke="#111111" stroke-width="0.25">2</text>
<text x="206.48" y="695.3" font-size="10.61" letter-spacing="0.653" fill="#111111" stroke="#111111" stroke-width="0.25">4</text>
<text x="56.25" y="544.59" font-size="10.61" letter-spacing="0.653" fill="#111111" stroke="#111111" stroke-width="0.25">4</text>
<path d="M78.24 680.4v3.6M70 672.31h-3.6M111.12 680.4v3.6M70 639.43h-3.6M144 680.4v3.6M70 606.55h-3.6M176.88 680.4v3.6M70 573.67h-3.6M209.76 680.4v3.6M70 540.79h-3.6" stroke="#333" stroke-width="0.9" fill="none"/>
<text x="98.09" y="525.7" font-size="13.18" letter-spacing="0.309" fill="#111111" stroke="#111111" stroke-width="0.32">Fiber Positions</text>
<text x="123.61" y="706.6" font-size="11.18" letter-spacing="0.326" fill="#111111" stroke="#111111" stroke-width="0.27">arcsecs</text>
<clipPath id="c1"><rect x="255" y="532.7" width="148" height="147.7"/></clipPath>
<g clip-path="url(#c1)">
<rect x="255" y="532.7" width="148" height="147.7" fill="#3e4d8a"/>
<polygon points="325.31 605.44 351.88 605.44 355 657 323.75 657" fill="#2f6b8e" filter="url(#blur3)" opacity="0.9"/>
<polygon points="272.19 588.25 295.62 583.56 322.19 600.75 320.62 613.25 301.88 616.38 278.44 610.12" fill="#277f8e" filter="url(#blur2)" opacity="0.95"/>
<polygon points="342.5 578.88 364.38 567.94 380 578.88 378.44 602.31 358.12 608.56 344.06 597.62" fill="#277f8e" filter="url(#blur2)" opacity="0.95"/>
<polygon points="314.38 664.81 330 652.31 348.75 664.81 342.5 679.97 320.62 679.97" fill="#25858e" filter="url(#blur2)" opacity="0.95"/>
<ellipse cx="272.19" cy="535.91" rx="10" ry="8" fill="#21918c" filter="url(#blur2)" opacity="0.95" transform="rotate(0 272.19 535.91)"/>
<ellipse cx="265.16" cy="674.97" rx="7" ry="5" fill="#26828e" filter="url(#blur2)" opacity="0.9" transform="rotate(0 265.16 674.97)"/>
<polygon points="264.38 578.88 275.31 583.56 286.25 599.19 278.44 605.44 267.5 594.5" fill="#31688e" filter="url(#blur2)" opacity="0.8"/>
<polygon points="297.19 572.62 314.38 562.47 330 571.06 330 594.5 322.19 597.62 306.56 583.56" fill="#440154" filter="url(#blur1)" opacity="1"/>
<polygon points="286.25 614.81 320.62 608.56 323.75 622.62 308.12 633.56 290.94 628.88" fill="#440154" filter="url(#blur1)" opacity="1"/>
<polygon points="251.88 575.75 265.94 578.88 272.19 610.12 251.88 613.25" fill="#440154" filter="url(#blur1)" opacity="1"/>
<polygon points="375.31 546.06 405 533.56 405 569.5 384.69 563.25" fill="#440154" filter="url(#blur1)" opacity="1"/>
<polygon points="380 577.31 398.75 571.06 405 572.62 405 605.44 383.12 603.88" fill="#440154" filter="url(#blur1)" opacity="1"/>
<polygon points="364.38 628.88 380 619.5 384.69 625.75 405 653.88 405 671.06 387.81 667.94 364.38 641.38" fill="#440154" filter="url(#blur1)" opacity="1"/>
<polygon points="251.88 628.88 264.38 625.75 286.25 641.38 289.38 666.38 273.75 667.94 251.88 672.62" fill="#481567" filter="url(#blur2)" opacity="0.9"/>
<polygon points="289.38 530.44 308.12 530.44 309.69 553.88 292.5 557" fill="#471365" filter="url(#blur2)" opacity="0.9"/>
<polygon points="337.81 533.56 367.5 533.56 370.62 557 340.94 558.56" fill="#470d60" filter="url(#blur2)" opacity="0.9"/>
<polygon points="330 577.31 343.28 578.88 342.5 594.5 330 597.62" fill="#481f70" filter="url(#blur2)" opacity="0.85"/>
<polygon points="251.88 550.75 264.38 552.31 267.5 577.31 251.88 575.75" fill="#482576" filter="url(#blur2)" opacity="0.8"/>
<polygon points="283.12 598.41 295.62 590.59 308.12 595.28 315.94 602.31 301.88 609.34 287.03 606.69" fill="#25ab82" filter="url(#blur1)" opacity="0.95"/>
<ellipse cx="299.53" cy="599.5" rx="9" ry="6" fill="#5ec962" filter="url(#blur1)" opacity="0.9" transform="rotate(-20 299.53 599.5)"/>
<ellipse cx="300.31" cy="599.5" rx="3.6" ry="2.8" fill="#c8e020" filter="url(#blur1)" opacity="1" transform="rotate(-20 300.31 599.5)"/>
<polygon points="352.66 584.34 364.38 577 372.97 584.34 371.41 596.84 361.25 599.97 352.66 594.19" fill="#25ab82" filter="url(#blur1)" opacity="0.95"/>
<ellipse cx="362.5" cy="587.94" rx="7" ry="8" fill="#5ec962" filter="url(#blur1)" opacity="0.9" transform="rotate(0 362.5 587.94)"/>
<ellipse cx="362.5" cy="587.47" rx="3.2" ry="3.6" fill="#dde318" filter="url(#blur1)" opacity="1" transform="rotate(0 362.5 587.47)"/>
<polygon points="320.62 664.81 330 657.78 342.5 664.81 338.59 674.97 324.53 676.53" fill="#1fa187" filter="url(#blur1)" opacity="0.9"/>
<circle cx="362.81" cy="677" r="1.7" fill="#440154"/>
</g>
<rect x="280.14" y="557.69" width="98.31" height="98.31" fill="none" stroke="#ff0000" stroke-width="1.35"/>
<path d="M329 570.38V599.97M329 613.95V643.54M292.83 606.55H321.6M337.22 606.55H365.99" stroke="#ff0000" stroke-width="1.1" fill="none"/>
<text x="325.36" y="546.2" font-size="10.01" letter-spacing="0.041" fill="#ff0000" stroke="#ff0000" stroke-width="0.23">N</text>
<text x="261.53" y="610" font-size="10.01" letter-spacing="-0.536" fill="#ff0000" stroke="#ff0000" stroke-width="0.23">E</text>
<rect x="255" y="532.7" width="148" height="147.7" fill="none" stroke="#333" stroke-width="1.1"/>
<text x="255.65" y="695.3" font-size="10.61" letter-spacing="1.544" fill="#111111" stroke="#111111" stroke-width="0.25">−4</text>
<text x="232.62" y="676.11" font-size="10.61" letter-spacing="1.544" fill="#111111" stroke="#111111" stroke-width="0.25">−4</text>
<text x="288.53" y="695.3" font-size="10.61" letter-spacing="1.544" fill="#111111" stroke="#111111" stroke-width="0.25">−2</text>
<text x="232.62" y="643.23" font-size="10.61" letter-spacing="1.544" fill="#111111" stroke="#111111" stroke-width="0.25">−2</text>
<text x="325.72" y="695.3" font-size="10.61" letter-spacing="0.653" fill="#111111" stroke="#111111" stroke-width="0.25">0</text>
<text x="241.25" y="610.35" font-size="10.61" letter-spacing="0.653" fill="#111111" stroke="#111111" stroke-width="0.25">0</text>
<text x="358.6" y="695.3" font-size="10.61" letter-spacing="0.653" fill="#111111" stroke="#111111" stroke-width="0.25">2</text>
<text x="241.25" y="577.47" font-size="10.61" letter-spacing="0.653" fill="#111111" stroke="#111111" stroke-width="0.25">2</text>
<text x="391.48" y="695.3" font-size="10.61" letter-spacing="0.653" fill="#111111" stroke="#111111" stroke-width="0.25">4</text>
<text x="241.25" y="544.59" font-size="10.61" letter-spacing="0.653" fill="#111111" stroke="#111111" stroke-width="0.25">4</text>
<path d="M263.24 680.4v3.6M255 672.31h-3.6M296.12 680.4v3.6M255 639.43h-3.6M329 680.4v3.6M255 606.55h-3.6M361.88 680.4v3.6M255 573.67h-3.6M394.76 680.4v3.6M255 540.79h-3.6" stroke="#333" stroke-width="0.9" fill="none"/>
<text x="288.25" y="525.7" font-size="13.18" letter-spacing="0.563" fill="#111111" stroke="#111111" stroke-width="0.32">Lineflux Map</text>
<text x="276" y="706.6" font-size="11.18" letter-spacing="0.635" fill="#111111" stroke="#111111" stroke-width="0.27">s/b: -0.11 +/- 0.073</text>
<clipPath id="c2"><rect x="440.5" y="532.7" width="148" height="147.7"/></clipPath>
<g clip-path="url(#c2)">
<rect x="440.5" y="532.7" width="148" height="147.7" filter="url(#bgn2)"/>
<g transform="translate(516 607.55) rotate(-32)"><ellipse cx="0" cy="0" rx="50" ry="27" fill="url(#gal)"/><ellipse cx="-1" cy="0" rx="24" ry="14" fill="url(#gal)"/></g>
</g>
<rect x="465.64" y="557.69" width="98.31" height="98.31" fill="none" stroke="#ff0000" stroke-width="1.35"/>
<ellipse cx="516.7" cy="607.75" rx="53" ry="31" fill="none" stroke="#fbd416" stroke-width="1.5" transform="rotate(-30 516.7 607.75)"/>
<path d="M514.5 569.9V600.6M514.5 614.1V643.1M478 606.8H509.9M523.3 606.8H551.7" stroke="#ff0000" stroke-width="1.1" fill="none"/>
<rect x="510.2" y="600.9" width="12.8" height="12.9" fill="#050505" stroke="#0000ff" stroke-width="1.2"/>
<text x="510.86" y="546.2" font-size="10.01" letter-spacing="0.041" fill="#ff0000" stroke="#ff0000" stroke-width="0.23">N</text>
<text x="447.03" y="610" font-size="10.01" letter-spacing="-0.536" fill="#ff0000" stroke="#ff0000" stroke-width="0.23">E</text>
<rect x="440.5" y="532.7" width="148" height="147.7" fill="none" stroke="#333" stroke-width="1.1"/>
<text x="441.15" y="695.3" font-size="10.61" letter-spacing="1.544" fill="#111111" stroke="#111111" stroke-width="0.25">−4</text>
<text x="418.12" y="676.11" font-size="10.61" letter-spacing="1.544" fill="#111111" stroke="#111111" stroke-width="0.25">−4</text>
<text x="474.03" y="695.3" font-size="10.61" letter-spacing="1.544" fill="#111111" stroke="#111111" stroke-width="0.25">−2</text>
<text x="418.12" y="643.23" font-size="10.61" letter-spacing="1.544" fill="#111111" stroke="#111111" stroke-width="0.25">−2</text>
<text x="511.22" y="695.3" font-size="10.61" letter-spacing="0.653" fill="#111111" stroke="#111111" stroke-width="0.25">0</text>
<text x="426.75" y="610.35" font-size="10.61" letter-spacing="0.653" fill="#111111" stroke="#111111" stroke-width="0.25">0</text>
<text x="544.1" y="695.3" font-size="10.61" letter-spacing="0.653" fill="#111111" stroke="#111111" stroke-width="0.25">2</text>
<text x="426.75" y="577.47" font-size="10.61" letter-spacing="0.653" fill="#111111" stroke="#111111" stroke-width="0.25">2</text>
<text x="576.98" y="695.3" font-size="10.61" letter-spacing="0.653" fill="#111111" stroke="#111111" stroke-width="0.25">4</text>
<text x="426.75" y="544.59" font-size="10.61" letter-spacing="0.653" fill="#111111" stroke="#111111" stroke-width="0.25">4</text>
<path d="M448.74 680.4v3.6M440.5 672.31h-3.6M481.62 680.4v3.6M440.5 639.43h-3.6M514.5 680.4v3.6M440.5 606.55h-3.6M547.38 680.4v3.6M440.5 573.67h-3.6M580.26 680.4v3.6M440.5 540.79h-3.6" stroke="#333" stroke-width="0.9" fill="none"/>
<text x="477.25" y="525.9" font-size="13.18" letter-spacing="0.380" fill="#111111" stroke="#111111" stroke-width="0.32">HSC(26.2) r</text>
<text x="454.23" y="706.4" font-size="11.18" letter-spacing="0.574" fill="#111111" stroke="#111111" stroke-width="0.27">m:20.4  re:2.5"  s:0.1"</text>
<text x="460.72" y="718.8" font-size="11.18" letter-spacing="0.244" fill="#111111" stroke="#111111" stroke-width="0.27">EWr: 1, PLAE: 0.155</text>
</svg>
</body></html>
